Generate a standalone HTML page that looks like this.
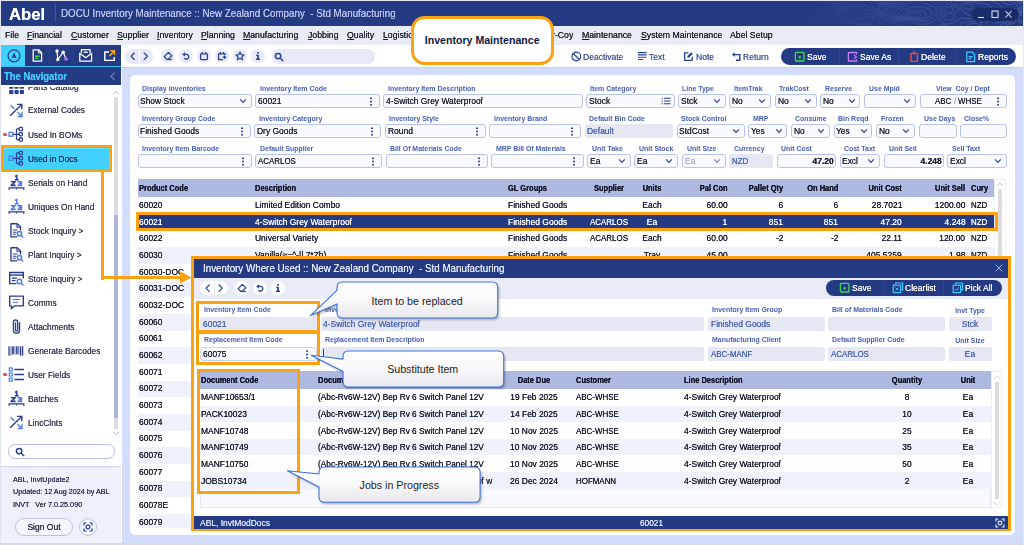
<!DOCTYPE html><html><head><meta charset="utf-8"><title>Abel</title><style>html,body{margin:0;padding:0}html{overflow:hidden;width:1024px;height:545px}body{width:1024px;height:545px;overflow:hidden;position:relative;background:#d3ddfb;font-family:"Liberation Sans",sans-serif;}body div,body span,body svg{position:absolute;display:block}span{white-space:pre;text-shadow:0 0 0.2px currentColor}u{text-decoration-thickness:0.8px;text-underline-offset:1px}</style></head><body>
<div style="left:0px;top:0px;width:1024px;height:26px;background:#243a83;"></div>
<svg style="left:808px;top:0px;" width="215" height="26" viewBox="0 0 215 26"><defs><linearGradient id="tg" x1="0" y1="0" x2="1" y2="0"><stop offset="0" stop-color="#fff" stop-opacity="0"/><stop offset="0.35" stop-color="#fff" stop-opacity="0.55"/><stop offset="1" stop-color="#fff" stop-opacity="1"/></linearGradient><mask id="tm"><rect width="215" height="26" fill="url(#tg)"/></mask></defs><path d="M76.5 0.0 77.3 1.0 78.2 1.7 79.3 2.1 81.0 2.1 82.3 1.7 83.3 1.2 84.3 0.4M36.0 18.7 37.0 18.0 37.7 17.0 38.2 15.7 38.3 14.7 38.0 13.2 37.3 12.3 35.7 12.1 34.3 12.7 33.5 13.3 32.7 14.3 32.3 15.3 32.3 17.0 32.8 18.0 33.7 18.7 35.3 18.9M75.9 24.0 77.0 23.5 77.2 22.0 77.0 20.7 76.7 19.1 76.3 18.0 75.3 17.0 74.0 17.0 73.0 17.6 72.2 18.3 71.4 19.3 70.7 20.3 70.0 21.3 69.9 22.7 70.7 23.3 72.0 23.8 73.3 24.0 75.0 24.1M75.0 0.0 75.5 1.0 76.3 2.0 77.1 2.7 78.3 3.3 79.7 3.6 81.3 3.5 82.7 3.2 83.8 2.7 85.0 2.0 85.9 1.3 86.7 0.6M36.2 20.3 37.3 19.8 38.3 19.0 39.0 18.3 39.8 17.3 40.3 16.3 40.9 15.0 40.9 13.3 40.3 12.1 39.7 11.3 38.7 10.5 37.3 10.1 35.9 10.3 34.7 10.9 33.7 11.6 32.8 12.3 32.0 13.2 31.3 14.2 30.9 15.3 30.9 17.0 31.3 18.3 32.0 19.3 32.8 20.0 34.0 20.5 35.7 20.5M89.0 25.7 88.8 24.7 88.0 23.8 87.0 23.3 85.7 22.9 84.3 22.5 83.0 22.2 81.8 21.7 80.7 21.0 80.0 20.3 79.3 19.2 78.8 18.0 78.3 16.9 77.7 15.9 76.7 15.1 75.3 14.8 73.7 15.0 72.7 15.4 71.6 16.0 70.7 16.7 69.7 17.4 68.7 18.1 67.6 18.7 66.3 19.1 65.0 19.5 63.7 19.8 62.4 20.3 61.7 21.2 62.0 22.3 62.7 23.1 63.7 23.7 64.9 24.3 66.0 24.7 67.3 25.1 68.7 25.4 70.3 25.7M9.1 25.7 8.0 25.3 6.3 25.3 5.0 25.6M73.6 0.0 74.2 1.0 74.9 2.0 75.7 3.0 76.4 3.7 77.4 4.3 78.7 4.8 80.3 5.0 82.0 4.7 83.3 4.3 84.3 3.9 85.5 3.3 86.6 2.7 87.5 2.0 88.4 1.3 89.3 0.6M141.9 4.3 143.0 3.7 143.7 2.9 143.5 1.7 142.4 1.0 141.3 0.7 139.7 0.6 138.5 1.0 137.8 2.0 138.3 3.3 139.0 4.0 140.3 4.5 141.9 4.3M163.6 9.0 164.7 8.4 165.0 7.3 164.4 6.3 163.6 5.7 162.5 5.0 161.3 4.5 160.2 4.0 159.0 3.6 157.7 3.3 156.0 3.0 154.3 3.2 153.5 4.0 153.8 5.3 154.4 6.3 155.3 7.3 156.2 8.0 157.3 8.6 158.6 9.0 160.0 9.2 161.7 9.3 163.3 9.1M35.7 22.0 37.0 21.7 38.0 21.3 39.1 20.7 40.2 20.0 41.3 19.3 42.3 18.9 44.0 18.7 45.7 18.8 47.3 18.9 49.0 18.8 50.3 18.6 51.9 18.3 53.0 17.7 52.3 16.3 51.9 15.3 51.4 14.0 51.0 13.0 50.5 11.7 50.0 10.7 49.3 9.7 48.3 8.8 47.3 8.3 45.8 8.3 44.7 8.7 43.3 9.2 42.0 9.5 40.7 9.3 39.3 8.8 38.0 8.6 36.7 8.7 35.3 9.3 34.3 9.9 33.3 10.6 32.4 11.3 31.7 12.0 30.8 13.0 30.1 14.0 29.7 15.3 29.6 16.7 29.8 18.0 30.3 19.3 31.0 20.3 31.8 21.0 32.9 21.7 34.2 22.0 35.7 22.0M93.7 25.7 93.6 24.3 93.0 23.0 92.3 22.3 91.2 21.7 90.0 21.3 88.6 21.0 87.0 20.8 85.7 20.5 84.3 20.3 83.0 19.8 82.0 19.2 81.2 18.3 80.5 17.3 80.0 16.3 79.3 15.3 78.4 14.3 77.3 13.7 76.0 13.4 74.3 13.4 73.0 13.8 71.7 14.3 70.7 14.7 69.5 15.3 68.3 15.9 67.2 16.3 65.7 16.7 64.3 16.8 62.7 16.8 61.0 16.9 59.3 17.0 58.0 17.1 56.7 17.3 55.1 17.7 53.8 18.0 54.0 19.0 54.7 19.8 55.4 20.7 56.3 21.5 57.3 22.3 58.2 23.0 59.2 23.7 60.3 24.3 61.3 24.7 62.7 25.2 64.0 25.6M10.9 25.7 10.0 25.0 8.7 24.5 7.0 24.4 5.5 24.7 4.3 25.0 3.0 25.6M72.4 0.0 73.0 1.0 73.7 2.1 74.3 3.1 75.1 4.0 76.0 4.9 77.0 5.7 78.0 6.1 79.3 6.4 80.9 6.3 82.3 6.0 83.6 5.7 84.7 5.2 85.9 4.7 87.0 4.1 88.0 3.5 89.0 2.8 90.0 2.2 91.0 1.5 92.0 1.0 93.3 0.3M133.4 0.0 133.3 1.2 133.7 2.3 134.3 3.4 135.1 4.3 136.0 5.2 137.0 6.0 138.0 6.6 139.0 7.1 140.3 7.4 141.7 7.3 143.0 6.7 144.0 6.0 145.0 5.3 146.0 4.7 147.0 4.2 148.3 3.9 149.5 4.3 150.4 5.0 151.3 6.0 152.0 7.0 152.7 8.0 153.3 9.0 153.9 10.0 154.6 11.0 155.3 11.9 156.3 12.7 157.3 13.3 158.3 13.9 159.3 14.4 160.7 14.9 162.0 15.3 163.3 15.5 165.0 15.5 166.3 15.3 167.7 15.0 169.0 14.5 170.3 14.0 171.3 13.6 172.7 13.0 173.7 12.6 175.0 12.0 176.0 11.6 177.3 11.1 178.4 10.7 179.7 10.1 180.7 9.6 181.7 9.0 182.6 8.0 182.7 6.7 182.0 5.7 181.0 5.0 180.0 4.5 178.7 4.1 177.3 3.8 176.0 3.6 174.3 3.5 172.7 3.4 171.0 3.4 169.7 3.3 168.0 3.2 166.3 3.0 165.0 2.9 163.7 2.7 162.0 2.4 160.7 2.2 159.3 1.9 157.9 1.7 156.3 1.4 155.0 1.3 153.3 1.2 151.7 1.3 150.0 1.3 148.3 1.1 147.2 0.7 146.0 0.1M214.7 2.6 213.4 3.0 212.3 3.6 211.7 4.3 212.0 5.7 213.0 6.3 214.0 6.7M97.8 25.7 97.6 24.3 97.2 23.0 96.7 21.9 95.7 21.1 94.7 20.6 93.3 20.2 92.0 19.9 90.7 19.6 89.0 19.4 87.7 19.2 86.3 19.0 85.0 18.7 83.7 18.1 82.7 17.3 82.0 16.5 81.3 15.5 80.7 14.5 79.9 13.7 79.0 12.9 77.8 12.3 76.3 12.0 74.7 12.1 73.3 12.4 72.0 12.8 70.7 13.2 69.4 13.7 68.3 14.0 66.7 14.3 65.3 14.4 64.0 14.3 62.3 14.1 61.0 13.9 59.5 13.7 58.0 13.4 56.7 13.2 55.3 12.7 54.3 12.1 53.5 11.3 52.7 10.4 52.0 9.6 51.3 8.7 50.3 7.7 49.4 7.0 48.3 6.5 47.0 6.3 45.7 6.5 44.3 7.0 43.3 7.3 41.7 7.6 40.0 7.5 38.7 7.3 37.3 7.4 36.0 7.8 35.0 8.3 34.0 9.0 33.0 9.7 32.0 10.5 31.0 11.3 30.2 12.0 29.3 13.0 28.7 14.0 28.3 15.1 28.2 16.7 28.4 18.0 28.8 19.3 29.3 20.3 30.1 21.3 31.0 22.2 32.0 22.9 33.2 23.3 34.7 23.6 36.3 23.5 37.7 23.2 39.0 22.7 40.1 22.3 41.3 21.9 42.7 21.7 44.3 21.5 46.0 21.5 47.7 21.6 49.0 21.7 50.7 22.0 52.0 22.3 53.1 22.7 54.3 23.2 55.5 23.7 56.7 24.2 57.7 24.7 59.0 25.2 60.3 25.7M141.7 20.3 143.2 20.0 144.3 19.6 145.3 19.0 146.3 18.2 147.0 17.1 147.0 15.9 146.3 14.9 145.3 14.1 144.3 13.6 143.0 13.0 141.7 12.8 140.0 13.0 139.0 13.4 138.0 14.1 137.0 15.0 136.3 15.9 135.8 17.0 135.9 18.7 136.7 19.6 137.7 20.1 139.0 20.4 140.7 20.4M12.4 25.7 11.7 25.0 10.6 24.3 9.3 24.0 7.7 23.8 6.0 23.9 4.7 24.2 3.4 24.7 2.3 25.1 1.0 25.7M71.0 0.0 71.7 1.0 72.4 2.0 73.1 3.0 73.7 4.0 74.4 5.0 75.1 6.0 76.0 7.0 76.7 7.7 77.7 8.5 79.0 8.7 80.3 8.4 81.6 8.0 82.7 7.6 84.0 7.1 85.1 6.7 86.3 6.1 87.3 5.6 88.5 5.0 89.7 4.3 90.7 3.8 91.7 3.2 92.8 2.7 94.0 2.1 95.2 1.7 96.3 1.3 97.7 0.8 98.9 0.3M128.9 0.0 129.3 1.1 130.0 2.3 130.7 3.2 131.3 4.0 132.3 5.0 133.0 5.7 134.0 6.6 134.9 7.3 135.7 8.0 136.6 9.0 137.0 10.0 136.8 11.3 136.1 12.3 135.3 13.3 134.7 14.2 134.0 15.1 133.3 16.2 132.7 17.3 132.3 18.3 132.0 20.0 132.6 21.3 133.3 22.1 134.3 22.9 135.3 23.4 136.7 24.0 138.0 24.1 139.3 23.9 140.7 23.6 142.0 23.3 143.3 22.9 144.7 22.4 145.7 22.0 147.0 21.4 148.0 20.8 149.0 20.3 150.0 19.7 151.1 19.0 152.3 18.4 153.7 18.1 155.3 18.1 157.0 18.3 158.3 18.5 159.7 18.7 161.3 18.8 163.0 18.9 164.7 18.8 166.0 18.6 167.3 18.3 168.7 17.9 170.0 17.4 171.1 17.0 172.3 16.5 173.7 16.0 174.7 15.7 176.0 15.2 177.3 14.9 178.7 14.6 180.0 14.3 181.4 14.0 183.0 13.7 184.3 13.4 185.7 13.1 187.0 12.8 188.3 12.4 189.3 12.0 190.7 11.4 191.7 10.8 192.6 10.0 193.3 9.0 193.4 7.7 193.0 6.7 192.2 5.7 191.3 4.9 190.3 4.1 189.3 3.4 188.3 2.8 187.3 2.2 186.3 1.7 185.0 1.1 183.8 0.7 182.4 0.3 181.0 0.2 179.3 0.2 177.7 0.3 176.3 0.4 174.7 0.7 173.3 0.8 172.0 1.0 170.3 1.2 168.7 1.3 167.3 1.3 165.7 1.3 164.3 1.3 162.7 1.2 161.0 1.0 159.7 0.8 158.3 0.7 156.7 0.4 155.3 0.3 153.7 0.1M214.7 1.5 213.3 1.8 212.0 2.2 210.8 2.7 209.7 3.3 209.0 4.0 208.7 5.3 209.3 6.3 210.3 6.9 211.5 7.3 212.8 7.7 214.3 7.9M102.9 25.7 102.1 24.7 101.5 23.7 100.9 22.7 100.2 21.7 99.3 21.0 98.1 20.3 97.0 19.9 95.7 19.5 94.3 19.1 93.0 18.9 91.7 18.6 90.0 18.3 88.7 18.1 87.3 17.8 86.0 17.4 85.0 17.0 84.0 16.2 83.2 15.3 82.5 14.3 81.8 13.3 81.0 12.3 80.3 11.6 79.3 10.7 78.3 10.0 77.0 9.9 75.7 10.3 74.3 10.7 73.3 11.0 72.0 11.4 70.7 11.8 69.3 12.1 67.7 12.3 66.0 12.2 64.7 12.0 63.3 11.6 62.0 11.1 60.7 10.7 59.6 10.3 58.3 10.0 57.0 9.6 55.7 9.1 54.7 8.5 53.7 7.8 52.7 7.0 51.8 6.3 50.9 5.7 49.8 5.0 48.7 4.6 47.0 4.6 45.7 4.9 44.7 5.3 43.3 5.9 42.0 6.2 40.3 6.3 38.7 6.2 37.2 6.3 36.0 6.8 34.9 7.3 33.9 8.0 33.0 8.7 32.0 9.3 31.0 10.0 30.0 10.7 29.0 11.5 28.0 12.3 27.3 13.2 26.7 14.3 26.5 15.7 26.5 17.3 26.8 18.7 27.3 20.0 27.8 21.0 28.5 22.0 29.3 23.0 30.0 23.7 31.0 24.3 32.3 24.9 33.7 25.2 35.0 25.3 36.3 25.3 37.8 25.0 39.1 24.7 40.4 24.3 41.8 24.0 43.3 23.7 44.7 23.6 46.3 23.5 48.0 23.6 49.3 23.7 51.0 23.9 52.3 24.2 53.7 24.6 55.0 25.0 56.0 25.3M149.7 12.0 148.0 12.1 146.7 11.7 145.7 11.1 144.9 10.3 144.7 9.2 145.3 8.0 146.1 7.3 147.3 6.7 149.0 7.0 149.8 7.7 150.4 8.7 150.7 10.0 150.4 11.3 149.7 12.0M13.8 25.7 13.0 24.8 12.0 24.1 10.8 23.7 9.4 23.3 8.0 23.2 6.3 23.3 5.0 23.5 3.7 23.9 2.6 24.3 1.3 24.9 0.1 25.3M140.1 25.7 139.0 25.3 137.7 24.8 136.0 24.7 134.3 25.0 133.0 25.1 131.7 25.4 130.0 25.6M45.1 0.0 46.3 0.5 47.7 1.0 48.8 1.0 50.0 0.4M69.3 0.0 70.0 0.7 70.8 1.7 71.5 2.7 72.2 3.7 72.7 4.7 73.3 6.0 73.7 7.0 73.6 8.3 72.8 9.3 71.7 9.9 70.4 10.3 69.0 10.5 67.3 10.5 66.0 10.1 64.9 9.7 63.7 9.0 62.8 8.3 61.8 7.7 60.8 7.0 59.7 6.4 58.5 6.0 57.0 5.7 55.7 5.3 54.7 5.0 53.3 4.3 52.3 3.8 51.3 3.2 50.3 2.6 49.3 2.0 47.7 1.9 46.7 2.5 45.7 3.1 44.7 3.8 43.6 4.3 42.3 4.8 41.0 5.0 39.3 5.1 37.7 5.2 36.3 5.6 35.3 6.1 34.3 6.7 33.3 7.4 32.3 8.1 31.3 8.7 30.2 9.3 29.0 9.9 28.0 10.4 26.8 11.0 25.7 11.6 24.7 12.3 24.0 13.1 23.6 14.3 23.7 15.7 24.0 17.0 24.4 18.3 24.9 19.7 25.3 20.9 25.8 22.0 26.3 23.0 27.0 24.0 27.9 25.0 28.7 25.7M115.6 0.0 117.0 0.0 118.7 0.0 120.3 0.1 121.7 0.3 123.0 0.8 124.0 1.3 125.0 2.0 126.0 2.8 127.0 3.7 127.7 4.3 128.7 5.2 129.6 6.0 130.3 6.7 131.3 7.6 132.1 8.3 132.8 9.3 133.2 10.7 133.0 12.0 132.3 13.3 131.7 14.3 131.0 15.3 130.3 16.3 129.7 17.1 128.9 18.0 128.0 18.9 127.2 19.7 126.3 20.5 125.3 21.2 124.3 21.9 123.3 22.3 122.0 22.8 120.7 23.2 119.3 23.5 118.0 23.8 116.7 24.0 115.0 24.2 113.3 24.3 111.7 24.3 110.0 24.2 108.7 24.0 107.3 23.6 106.1 23.0 105.0 22.4 104.0 21.7 103.0 21.1 102.0 20.6 100.7 20.0 99.7 19.6 98.3 19.2 97.0 18.8 95.7 18.5 94.3 18.2 93.0 17.9 91.7 17.6 90.3 17.3 89.0 17.0 87.7 16.5 86.5 16.0 85.6 15.3 84.8 14.3 84.2 13.3 83.7 12.0 83.5 10.7 84.1 9.7 85.0 8.9 86.0 8.3 87.2 7.7 88.3 7.1 89.3 6.6 90.5 6.0 91.7 5.4 92.7 4.9 94.0 4.4 95.0 4.0 96.3 3.5 97.7 3.1 98.7 2.7 99.9 2.0 100.8 1.3 101.7 0.6M168.3 0.0 166.7 0.2 165.0 0.2 163.3 0.2 161.7 0.1 160.3 0.0M214.7 0.5 213.3 0.7 211.7 1.0 210.4 1.3 209.3 1.7 208.0 2.2 206.9 2.7 205.7 3.3 204.7 3.8 203.3 4.3 202.0 4.6 200.3 4.4 199.0 4.0 198.0 3.6 196.7 3.1 195.7 2.6 194.4 2.0 193.3 1.4 192.3 0.8 191.3 0.2M152.2 25.7 152.7 24.5 153.7 23.7 154.7 23.2 156.0 22.8 157.3 22.4 158.7 22.1 160.0 21.8 161.3 21.6 163.0 21.3 164.3 21.2 166.0 21.0 167.3 20.9 168.7 20.6 170.0 20.2 171.1 19.7 172.3 19.1 173.3 18.6 174.7 18.0 175.7 17.7 177.0 17.3 178.3 17.0 180.0 16.7 181.3 16.5 182.7 16.3 184.3 16.1 185.8 16.0 187.3 15.8 189.0 15.7 190.3 15.5 191.7 15.3 193.2 15.0 194.5 14.7 195.7 14.2 196.9 13.7 198.0 13.0 198.9 12.3 199.8 11.7 200.7 11.0 201.7 10.2 202.7 9.4 203.7 8.8 205.0 8.4 206.7 8.4 208.3 8.5 210.0 8.6 211.3 8.8 213.0 8.9 214.3 9.0M15.7 25.7 15.0 24.9 14.0 24.2 13.0 23.7 11.7 23.2 10.3 22.8 9.0 22.6 7.3 22.6 6.0 22.7 4.7 23.0 3.3 23.5 2.0 24.0 1.0 24.4M43.0 25.7 44.3 25.4 45.7 25.3 47.3 25.2 49.0 25.2 50.7 25.3 52.0 25.5M0.0 10.3 1.7 10.3 3.3 10.3 5.0 10.3 6.7 10.2 8.3 10.0 9.7 9.9 11.1 9.7 12.0 9.0 11.2 8.3 10.3 7.7 9.3 7.0 8.3 6.2 7.3 5.4 6.5 4.7 5.7 3.8 4.9 3.0 4.2 2.0 3.5 1.0M41.9 0.0 43.0 0.6 43.7 1.3 43.3 2.6 42.3 3.3 41.3 3.7 39.7 3.9 38.3 4.0 37.0 4.4 35.7 5.0 34.7 5.6 33.7 6.2 32.7 6.9 31.7 7.5 30.6 8.0 29.3 8.5 28.0 8.9 26.7 9.1 25.0 9.3 23.3 9.3 21.7 9.3 20.0 9.2 18.3 9.2 16.7 9.3 15.3 9.4 14.1 10.0 15.0 10.8 16.0 11.7 16.7 12.3 17.7 13.2 18.4 14.0 19.2 15.0 20.0 16.0 20.6 17.0 21.1 18.0 21.7 19.3 22.0 20.5 22.2 22.0 22.1 23.7 21.5 24.7 20.3 25.2 19.0 25.0 17.7 24.5 16.6 24.0 15.3 23.5 14.1 23.0 13.0 22.7 11.7 22.3 10.0 22.0 8.7 21.9 7.0 22.0 5.7 22.2 4.3 22.5 3.0 23.0 2.0 23.4 0.7 23.9M109.6 0.0 110.6 0.7 111.3 1.4 112.3 2.3 113.3 2.9 114.6 3.3 116.0 3.6 117.3 3.7 119.0 3.9 120.3 4.2 121.7 4.6 122.7 5.1 123.8 5.7 124.9 6.3 125.9 7.0 126.8 7.7 127.7 8.5 128.4 9.3 129.0 10.3 129.2 12.0 128.8 13.3 128.3 14.3 127.5 15.3 126.7 16.2 125.7 17.0 124.8 17.7 123.7 18.3 122.7 18.9 121.7 19.5 120.5 20.0 119.3 20.5 118.0 20.9 116.7 21.2 115.3 21.5 113.7 21.6 112.3 21.7 111.0 21.6 109.3 21.5 108.0 21.2 106.7 20.8 105.3 20.4 104.1 20.0 103.0 19.6 101.7 19.2 100.3 18.8 99.0 18.5 97.7 18.1 96.3 17.8 95.0 17.4 93.7 17.1 92.3 16.7 91.0 16.3 90.0 16.0 88.8 15.3 87.9 14.7 87.2 13.7 87.0 12.3 87.3 11.2 88.0 10.3 89.0 9.6 90.0 8.9 91.1 8.3 92.3 7.7 93.3 7.3 94.7 6.8 95.8 6.3 97.0 6.0 98.3 5.5 99.7 5.1 100.7 4.6 101.7 3.9 102.4 3.0 103.0 2.0 103.7 1.0 104.7 0.1M209.8 0.0 208.3 0.3 207.0 0.6 205.7 0.8 204.0 1.0 203.0 1.0 201.3 0.9 200.0 0.7 198.7 0.3M70.0 8.5 68.3 8.6 67.0 8.3 65.9 7.7 65.0 6.9 64.3 6.0 63.7 4.8 63.4 3.3 63.8 2.0 64.7 1.2 66.0 0.8 67.4 1.0 68.7 1.6 69.6 2.3 70.3 3.2 71.0 4.3 71.4 5.3 71.5 7.0 70.8 8.0M173.8 25.7 172.9 25.0 172.2 24.0 172.7 23.0 173.3 22.0 174.3 21.0 175.2 20.3 176.3 19.7 177.3 19.3 178.7 18.9 180.0 18.6 181.7 18.4 183.0 18.3 184.7 18.2 186.3 18.1 188.0 18.1 189.7 18.0 191.0 18.0 192.7 17.9 194.3 17.7 195.7 17.5 197.0 17.2 198.1 16.7 199.1 16.0 200.0 15.3 201.0 14.4 201.8 13.7 202.7 13.0 203.7 12.3 204.9 11.7 206.0 11.2 207.3 10.7 208.7 10.4 210.0 10.2 211.7 10.1 213.3 10.1M159.1 25.7 160.0 24.8 161.0 24.2 162.3 23.7 163.7 23.4 165.0 23.2 166.7 23.2 168.0 23.4 169.3 23.7 170.7 24.3 170.7 25.5M38.9 0.0 40.0 0.7 40.5 1.7 39.6 2.3 38.3 2.8 37.0 3.3 36.0 3.8 35.0 4.4 34.0 5.1 33.0 5.7 31.9 6.3 30.7 6.9 29.3 7.3 28.0 7.5 26.3 7.5 24.8 7.3 23.3 7.1 22.0 6.8 20.7 6.4 19.3 6.1 18.0 5.7 16.7 5.4 15.5 5.0 14.3 4.6 13.0 4.1 12.0 3.6 10.8 3.0 9.8 2.3 9.0 1.7 8.0 0.7M113.7 19.7 112.0 19.9 110.3 19.9 108.7 19.8 107.3 19.6 106.0 19.3 104.5 19.0 103.1 18.7 101.7 18.3 100.4 18.0 99.2 17.7 97.9 17.3 96.7 17.0 95.3 16.6 94.0 16.1 92.9 15.7 91.8 15.0 91.0 14.2 90.9 12.7 91.6 11.7 92.5 11.0 93.7 10.4 94.7 9.9 96.0 9.4 97.2 9.0 98.4 8.7 99.7 8.3 101.1 8.0 102.5 7.7 103.8 7.3 105.1 7.0 106.4 6.7 108.0 6.5 109.7 6.6 111.0 6.7 112.7 6.9 114.0 7.1 115.7 7.3 117.0 7.5 118.3 7.9 119.7 8.3 120.7 8.8 121.7 9.4 122.7 10.2 123.3 11.1 123.8 12.3 123.6 13.7 123.0 14.8 122.3 15.7 121.3 16.5 120.3 17.2 119.3 17.8 118.3 18.3 117.0 18.9 115.7 19.3 114.3 19.6M178.9 25.7 178.3 24.7 178.1 23.0 178.7 22.0 179.7 21.3 181.0 20.8 182.3 20.6 184.0 20.4 185.3 20.3 187.0 20.3 188.7 20.2 190.3 20.2 192.0 20.2 193.7 20.1 195.0 20.0 196.7 19.8 198.0 19.5 199.3 19.0 200.3 18.3 201.0 17.7 201.8 16.7 202.5 15.7 203.3 14.8 204.2 14.0 205.1 13.3 206.3 12.7 207.3 12.2 208.7 11.8 210.0 11.5 211.3 11.3 213.0 11.2 214.7 11.2M0.0 12.2 1.3 12.4 2.7 12.7 4.3 13.0 5.7 13.3 7.0 13.5 8.3 13.8 9.7 14.0 11.3 14.3 12.5 14.7 13.7 15.1 14.8 15.7 15.8 16.3 16.7 17.1 17.4 18.0 18.0 19.3 18.0 20.4 17.3 21.3 16.0 21.7 14.7 21.6 13.0 21.4 11.7 21.3 10.0 21.1 8.3 21.1 6.7 21.2 5.3 21.5 4.0 22.0 3.0 22.3 1.7 22.9 0.5 23.3M36.7 0.0 37.2 1.3 36.4 2.3 35.5 3.0 34.6 3.7 33.6 4.3 32.5 5.0 31.3 5.6 30.1 6.0 28.7 6.2 27.0 6.1 25.7 5.9 24.3 5.6 23.0 5.2 21.7 4.7 20.5 4.3 19.3 3.9 18.0 3.4 16.8 3.0 15.7 2.5 14.5 2.0 13.3 1.3 12.4 0.7 11.7 0.0M112.0 18.3 110.3 18.5 108.7 18.5 107.0 18.4 105.7 18.2 104.3 18.0 102.7 17.7 101.3 17.3 100.0 17.0 98.9 16.7 97.7 16.2 96.3 15.7 95.3 15.1 94.7 14.3 95.0 13.0 95.9 12.3 97.0 11.8 98.3 11.3 99.7 11.0 101.0 10.7 102.3 10.5 104.0 10.4 105.3 10.3 107.0 10.2 108.7 10.3 110.0 10.4 111.7 10.6 113.0 10.9 114.2 11.3 115.3 11.8 116.3 12.5 117.1 13.3 117.5 14.7 117.0 15.8 116.2 16.7 115.2 17.3 114.0 17.8 112.7 18.2M186.4 25.7 186.4 24.7 187.3 23.7 188.3 23.2 189.7 22.8 191.0 22.6 192.3 22.3 194.0 22.1 195.3 21.9 196.9 21.7 198.3 21.4 199.7 21.1 201.0 20.7 202.0 20.1 202.7 19.3 203.3 18.0 203.7 17.0 204.3 15.9 205.1 15.0 206.0 14.2 207.0 13.6 208.3 13.0 209.4 12.7 211.0 12.3 212.3 12.2 214.0 12.1M0.0 13.6 1.3 13.9 2.7 14.3 3.7 14.7 5.0 15.1 6.3 15.7 7.3 16.1 8.7 16.6 9.7 17.0 10.8 17.7 11.5 18.7 10.3 19.3 9.0 19.5 7.7 19.8 6.3 20.2 5.2 20.7 4.0 21.1 2.9 21.7 1.7 22.2 0.6 22.7M35.0 0.0 35.3 1.2 34.7 2.3 33.9 3.0 32.9 3.7 31.8 4.3 30.7 4.7 29.0 5.0 27.3 4.8 26.0 4.5 24.7 4.1 23.6 3.7 22.3 3.1 21.2 2.7 20.0 2.1 19.0 1.7 17.7 1.0 16.7 0.4M110.0 17.0 108.3 17.2 106.7 17.2 105.0 17.1 103.7 16.8 102.3 16.5 101.0 16.1 99.8 15.7 98.8 15.0 98.7 14.0 99.7 13.3 101.0 12.8 102.3 12.6 104.0 12.4 105.7 12.4 107.3 12.5 108.7 12.7 110.0 13.1 111.3 13.6 112.2 14.3 112.5 15.7 111.7 16.4 110.3 16.9M192.1 25.7 193.0 24.8 194.0 24.3 195.3 23.8 196.7 23.5 198.0 23.2 199.3 22.9 200.7 22.7 202.1 22.3 203.3 21.9 204.3 21.2 205.0 20.0 205.1 18.7 205.3 17.3 205.9 16.0 206.7 15.2 207.7 14.4 208.7 13.9 210.0 13.4 211.3 13.2 213.0 13.0 214.0 13.0M0.0 14.7 1.3 15.2 2.4 15.7 3.5 16.3 4.3 17.0 5.0 18.0 4.7 19.3 3.9 20.0 3.0 20.7 1.9 21.3 0.7 21.9M33.4 0.0 33.7 1.1 33.0 2.2 32.0 3.0 31.0 3.4 29.7 3.7 28.3 3.6 27.0 3.3 25.7 2.8 24.7 2.3 23.5 1.7 22.3 1.0 21.4 0.3M197.0 25.7 198.0 25.1 199.3 24.7 200.7 24.4 202.0 24.1 203.3 23.8 204.7 23.6 206.0 23.1 207.0 22.4 207.3 21.3 207.1 20.0 206.8 18.7 206.9 17.0 207.5 16.0 208.3 15.2 209.3 14.6 210.7 14.1 212.0 13.9 213.7 13.8M0.0 15.9 1.0 16.4 2.0 17.2 2.7 18.3 2.5 19.3 1.7 20.3 0.8 21.0M30.9 0.0 31.4 1.0 30.7 1.7 29.0 1.9 27.7 1.5 26.7 0.8M214.7 22.4 213.0 22.5 211.7 22.2 210.7 21.6 209.7 20.7 209.0 19.7 208.5 18.7 208.3 17.6 208.8 16.3 209.7 15.6 210.9 15.0 212.3 14.7 213.7 14.6M0.0 17.3 0.7 18.1 0.7 19.5 0.0 20.4M214.7 20.4 213.0 20.4 211.9 20.0 210.9 19.3 210.2 18.3 210.3 16.8 211.3 16.0 212.3 15.7 214.0 15.6" fill="none" stroke="#8fa3e0" stroke-width="0.5" opacity="0.62" mask="url(#tm)"/></svg>
<span style="top:7.30px;height:14px;line-height:14px;font-size:17.3px;color:#fff;white-space:pre;font-weight:bold;left:8.6px;transform:scaleX(0.965);transform-origin:0 50%;">Abel</span>
<div style="left:55px;top:4px;width:1px;height:18px;background:#3f56a0;"></div>
<span style="top:5.60px;height:14px;line-height:14px;font-size:11px;color:#b9c5ea;white-space:pre;left:60.5px;transform:scaleX(0.89);transform-origin:0 50%;">DOCU Inventory Maintenance :: New Zealand Company  - Std Manufacturing</span>
<div style="left:971px;top:7.5px;width:48px;height:13px;background:#1a2c68;border-radius:6.5px;"></div>
<svg style="left:975px;top:8px;" width="40" height="12" viewBox="0 0 40 12"><g fill="none" stroke="#d5dcf3" stroke-width="1.1"><path d="M3 9.5h6"/><rect x="17" y="3" width="6" height="6.5"/><path d="M30.5 3l6 6.5M36.5 3l-6 6.5"/></g></svg>
<div style="left:0px;top:26px;width:1024px;height:19.3px;background:#e9ecf5;"></div>
<span style="top:28.40px;height:14px;line-height:14px;font-size:9.8px;color:#1c2030;white-space:pre;left:5px;transform:scaleX(0.89);transform-origin:0 50%;">File</span>
<span style="top:28.40px;height:14px;line-height:14px;font-size:9.8px;color:#1c2030;white-space:pre;left:27px;transform:scaleX(0.89);transform-origin:0 50%;"><u>F</u>inancial</span>
<span style="top:28.40px;height:14px;line-height:14px;font-size:9.8px;color:#1c2030;white-space:pre;left:70.5px;transform:scaleX(0.89);transform-origin:0 50%;"><u>C</u>ustomer</span>
<span style="top:28.40px;height:14px;line-height:14px;font-size:9.8px;color:#1c2030;white-space:pre;left:117px;transform:scaleX(0.89);transform-origin:0 50%;"><u>S</u>upplier</span>
<span style="top:28.40px;height:14px;line-height:14px;font-size:9.8px;color:#1c2030;white-space:pre;left:157px;transform:scaleX(0.89);transform-origin:0 50%;"><u>I</u>nventory</span>
<span style="top:28.40px;height:14px;line-height:14px;font-size:9.8px;color:#1c2030;white-space:pre;left:201px;transform:scaleX(0.89);transform-origin:0 50%;"><u>P</u>lanning</span>
<span style="top:28.40px;height:14px;line-height:14px;font-size:9.8px;color:#1c2030;white-space:pre;left:243px;transform:scaleX(0.89);transform-origin:0 50%;"><u>M</u>anufacturing</span>
<span style="top:28.40px;height:14px;line-height:14px;font-size:9.8px;color:#1c2030;white-space:pre;left:308px;transform:scaleX(0.89);transform-origin:0 50%;"><u>J</u>obbing</span>
<span style="top:28.40px;height:14px;line-height:14px;font-size:9.8px;color:#1c2030;white-space:pre;left:347px;transform:scaleX(0.89);transform-origin:0 50%;"><u>Q</u>uality</span>
<span style="top:28.40px;height:14px;line-height:14px;font-size:9.8px;color:#1c2030;white-space:pre;left:383px;transform:scaleX(0.89);transform-origin:0 50%;"><u>L</u>ogistics</span>
<span style="top:28.40px;height:14px;line-height:14px;font-size:9.8px;color:#1c2030;white-space:pre;right:450.70000000000005px;transform:scaleX(0.89);transform-origin:100% 50%;"><u>I</u>nter-Coy</span>
<span style="top:28.40px;height:14px;line-height:14px;font-size:9.8px;color:#1c2030;white-space:pre;left:582px;transform:scaleX(0.89);transform-origin:0 50%;"><u>M</u>aintenance</span>
<span style="top:28.40px;height:14px;line-height:14px;font-size:9.8px;color:#1c2030;white-space:pre;left:641px;transform:scaleX(0.89);transform-origin:0 50%;"><u>S</u>ystem Maintenance</span>
<span style="top:28.40px;height:14px;line-height:14px;font-size:9.8px;color:#1c2030;white-space:pre;left:730px;transform:scaleX(0.89);transform-origin:0 50%;">Abel Setup</span>
<div style="left:0px;top:45.3px;width:1024px;height:21.6px;background:#ffffff;"></div>
<div style="left:121.3px;top:66.9px;width:903px;height:1px;background:#c3cef0;"></div>
<div style="left:0px;top:45.3px;width:121.3px;height:21.7px;background:#243a83;"></div>
<div style="left:1px;top:45.3px;width:24.3px;height:21px;background:#41d0ff;"></div>
<div style="left:0px;top:66px;width:121.3px;height:1.6px;background:#3bbcf0;"></div>
<div style="left:124.5px;top:49.2px;width:28.5px;height:14.5px;background:#e7eaf6;border-radius:7.25px;"></div>
<div style="left:138.5px;top:49.2px;width:0.6px;height:14.5px;background:#ffffff;"></div>
<svg style="left:124.5px;top:49.2px;" width="28.5" height="14.5" viewBox="0 0 28.5 14.5"><g fill="none" stroke="#2c4191" stroke-width="1.25" stroke-linecap="round" stroke-linejoin="round"><path d="M9.295 4.05l-3.2 3.2l3.2 3.2"/><path d="M19.205 4.05l3.2 3.2l-3.2 3.2"/></g></svg>
<div style="left:160.5px;top:49.4px;width:14px;height:14px;background:#e7eaf6;border-radius:7.0px;"></div>
<svg style="left:162.5px;top:51.4px;" width="10" height="10" viewBox="0 0 10 10"><g fill="none" stroke="#2c4191" stroke-width="1.25" stroke-linejoin="round"><path d="M1.2 5.6L5.4 1.4L8.8 4.8L5.2 8.4H3.6Z"/><path d="M3.6 8.5H9"/></g></svg>
<div style="left:179.0px;top:49.4px;width:14px;height:14px;background:#e7eaf6;border-radius:7.0px;"></div>
<svg style="left:181px;top:51.4px;" width="10" height="10" viewBox="0 0 10 10"><g fill="none" stroke="#2c4191" stroke-width="1.4"><path d="M2.6 3.4H5.6A2.4 2.4 0 1 1 3.4 7.2"/></g><path d="M1.2 3.4L4 1.2V5.6Z" fill="#2c4191"/></svg>
<div style="left:197.0px;top:49.4px;width:14px;height:14px;background:#e7eaf6;border-radius:7.0px;"></div>
<svg style="left:199px;top:51.4px;" width="10" height="10" viewBox="0 0 10 10"><g fill="none" stroke="#2c4191" stroke-width="1.3"><rect x="1.6" y="2.8" width="6.8" height="5.8" rx="0.8"/><path d="M3.2 1v2M6.8 1v2"/></g></svg>
<div style="left:215.0px;top:49.4px;width:14px;height:14px;background:#e7eaf6;border-radius:7.0px;"></div>
<svg style="left:217px;top:51.4px;" width="10" height="10" viewBox="0 0 10 10"><g fill="none" stroke="#2c4191" stroke-width="1.3"><path d="M8 4V2.8H1.6V8.6H6"/><path d="M3.2 1v2M6.4 1v2M5.6 6.2H9.4M7.5 4.4V8"/></g></svg>
<div style="left:233.0px;top:49.4px;width:14px;height:14px;background:#e7eaf6;border-radius:7.0px;"></div>
<svg style="left:235px;top:51.4px;" width="10" height="10" viewBox="0 0 10 10"><path d="M5 1.1L6.2 3.7L9 4L6.9 5.9L7.5 8.7L5 7.3L2.5 8.7L3.1 5.9L1 4L3.8 3.7Z" fill="none" stroke="#2c4191" stroke-width="1.2" stroke-linejoin="round"/></svg>
<div style="left:251.0px;top:49.4px;width:14px;height:14px;background:#e7eaf6;border-radius:7.0px;"></div>
<svg style="left:253px;top:51.4px;" width="10" height="10" viewBox="0 0 10 10"><g fill="#2c4191"><rect x="4.2" y="1" width="1.7" height="1.7"/><path d="M3.2 3.8H5.9V7.6H6.9V8.9H3V7.6H4.2V5.1H3.2Z"/></g></svg>
<div style="left:272px;top:49.2px;width:102.5px;height:14.5px;background:#e7eaf6;border-radius:7.25px;"></div>
<svg style="left:274px;top:51.6px;" width="10" height="10" viewBox="0 0 10 10"><g fill="none" stroke="#2c4191" stroke-width="1.5" stroke-linecap="round"><circle cx="4.1" cy="4.1" r="2.7"/><path d="M6.3 6.3L8.8 8.8"/></g></svg>
<svg style="left:6.5px;top:48.5px;" width="14" height="14" viewBox="0 0 14 14"><circle cx="7" cy="6.8" r="6" fill="none" stroke="#243a83" stroke-width="1.2"/><path d="M7 3.2L9.6 9.6L7 8.3L4.4 9.6Z" fill="#243a83"/></svg>
<svg style="left:31px;top:48px;" width="14" height="15" viewBox="0 0 14 15"><path d="M2.2 1.8H7.6L10.6 4.8V13.2H2.2Z" fill="none" stroke="#ffffff" stroke-width="1.3" stroke-linejoin="round"/><path d="M7.4 2V5H10.4" fill="none" stroke="#ffffff" stroke-width="1"/><path d="M4 8.3H8.6M4 10.4H7.4" stroke="#3ddc4a" stroke-width="1.4"/></svg>
<svg style="left:54px;top:48px;" width="16" height="15" viewBox="0 0 16 15"><path d="M3 3L3.8 11.6L9.2 4.2L12 11" fill="none" stroke="#ffffff" stroke-width="1.2"/><circle cx="3" cy="3" r="1.7" fill="#ffffff"/><circle cx="9.2" cy="4.2" r="1.7" fill="#ffffff"/><circle cx="3.8" cy="11.6" r="1.7" fill="#ffffff"/><circle cx="12" cy="11" r="1.8" fill="#c070ff"/></svg>
<svg style="left:78px;top:48px;" width="16" height="15" viewBox="0 0 16 15"><g fill="none" stroke="#ffffff" stroke-width="1.3" stroke-linejoin="round"><path d="M1.8 5.2V13.2H13.6V5.2L7.7 9.8Z"/><path d="M3.4 5V1.6H12V5"/><path d="M5.6 4.2H9.8"/></g></svg>
<svg style="left:102px;top:48px;" width="16" height="15" viewBox="0 0 16 15"><path d="M7 4H2.8V12.4H12.2V9" fill="none" stroke="#ffffff" stroke-width="1.4"/><path d="M7.4 7.9L12.2 2.9M8.2 2.7H12.4V6.9" fill="none" stroke="#f7a21b" stroke-width="1.5"/></svg>
<div style="left:49px;top:47px;width:0.6px;height:18px;background:#2c4490;"></div>
<div style="left:73px;top:47px;width:0.6px;height:18px;background:#2c4490;"></div>
<div style="left:97px;top:47px;width:0.6px;height:18px;background:#2c4490;"></div>
<svg style="left:571px;top:51px;" width="11" height="11" viewBox="0 0 11 11"><g fill="none" stroke="#2c4191" stroke-width="1.2"><circle cx="5.3" cy="5.5" r="4.3"/><path d="M2.3 2.5L8.3 8.5"/></g></svg>
<span style="top:49.60px;height:14px;line-height:14px;font-size:9.6px;color:#4b5d9f;white-space:pre;left:583.3px;transform:scaleX(0.89);transform-origin:0 50%;">Deactivate</span>
<svg style="left:637px;top:51px;" width="11" height="11" viewBox="0 0 11 11"><path d="M1 1.6H9.6M1 3.9H9.6M1 6.2H9.6M1 8.5H6.4" stroke="#2c4191" stroke-width="1.1"/></svg>
<span style="top:49.60px;height:14px;line-height:14px;font-size:9.6px;color:#4b5d9f;white-space:pre;left:649.3px;transform:scaleX(0.89);transform-origin:0 50%;">Text</span>
<svg style="left:683px;top:51px;" width="11" height="11" viewBox="0 0 11 11"><path d="M5.4 1.8H1.6V9.4H9.2V5.8" fill="none" stroke="#2c4191" stroke-width="1.3"/><path d="M4.2 6.8L4.6 4.8L8.2 1.2L9.8 2.8L6.2 6.4Z" fill="#2c4191"/></svg>
<span style="top:49.60px;height:14px;line-height:14px;font-size:9.6px;color:#4b5d9f;white-space:pre;left:695.8px;transform:scaleX(0.89);transform-origin:0 50%;">Note</span>
<svg style="left:731px;top:51px;" width="11" height="11" viewBox="0 0 11 11"><path d="M3.6 1.2L1 3.6L3.6 6Z" fill="#2c4191"/><path d="M2.6 3.6H8.8V9.2H5" fill="none" stroke="#2c4191" stroke-width="1.4"/></svg>
<span style="top:49.60px;height:14px;line-height:14px;font-size:9.6px;color:#4b5d9f;white-space:pre;left:743px;transform:scaleX(0.89);transform-origin:0 50%;">Return</span>
<div style="left:780.5px;top:48px;width:235.8px;height:17px;background:#243a83;border-radius:8.5px;"></div>
<div style="left:839px;top:49px;width:0.6px;height:15px;background:#2e4592;"></div>
<div style="left:897.5px;top:49px;width:0.6px;height:15px;background:#2e4592;"></div>
<div style="left:956px;top:49px;width:0.6px;height:15px;background:#2e4592;"></div>
<svg style="left:794px;top:51px;" width="12" height="12" viewBox="0 0 12 12"><rect x="1.4" y="1.4" width="8.6" height="8.6" rx="0.8" fill="none" stroke="#3fd45a" stroke-width="1.3"/><rect x="4.6" y="5.2" width="2.2" height="2.2" fill="#3fd45a"/></svg>
<span style="top:49.60px;height:14px;line-height:14px;font-size:9.6px;color:#fff;white-space:pre;left:807.3px;transform:scaleX(0.89);transform-origin:0 50%;">Save</span>
<svg style="left:847px;top:51px;" width="12" height="12" viewBox="0 0 12 12"><path d="M9.6 3.4V1.6H1.4V10H9.6V8.4" fill="none" stroke="#c67bff" stroke-width="1.3"/><path d="M7 4L9.4 5.9L7 7.8" fill="none" stroke="#c67bff" stroke-width="1.2"/><path d="M2.6 1.4h1M5 1.4h1M7.4 1.4h1" stroke="#c67bff" stroke-width="1.6"/></svg>
<span style="top:49.60px;height:14px;line-height:14px;font-size:9.6px;color:#fff;white-space:pre;left:859.8px;transform:scaleX(0.89);transform-origin:0 50%;">Save As</span>
<svg style="left:909px;top:51px;" width="11" height="12" viewBox="0 0 11 12"><path d="M2 3.4V10.4H8.4V3.4" fill="none" stroke="#ef4a3c" stroke-width="1.4"/><path d="M0.8 2.6H9.6M3.6 1.2H6.8" stroke="#ef4a3c" stroke-width="1.3"/></svg>
<span style="top:49.60px;height:14px;line-height:14px;font-size:9.6px;color:#fff;white-space:pre;left:921.3px;transform:scaleX(0.89);transform-origin:0 50%;">Delete</span>
<svg style="left:965px;top:51px;" width="12" height="12" viewBox="0 0 12 12"><path d="M1.8 1.2H7.2L9.6 3.6V10.6H1.8Z" fill="none" stroke="#3fc8ff" stroke-width="1.3" stroke-linejoin="round"/><path d="M3.6 5.6H7.8M3.6 7.8H6.6" stroke="#3fc8ff" stroke-width="1.1"/></svg>
<span style="top:49.60px;height:14px;line-height:14px;font-size:9.6px;color:#fff;white-space:pre;left:978px;transform:scaleX(0.89);transform-origin:0 50%;">Reports</span>
<div style="left:0px;top:67px;width:121.8px;height:478px;background:#ffffff;"></div>
<div style="left:0px;top:67.2px;width:121.3px;height:18.3px;background:#243a83;"></div>
<span style="top:69.30px;height:14px;line-height:14px;font-size:10.6px;color:#43c6ff;white-space:pre;font-weight:bold;left:4.3px;transform:scaleX(0.89);transform-origin:0 50%;">The Navigator</span>
<svg style="left:108px;top:71px;" width="10" height="11" viewBox="0 0 10 11"><path d="M6.6 1.6L3 5.4L6.6 9.2" fill="none" stroke="#6f86c9" stroke-width="1.1"/></svg>
<div style="left:0;top:86.5px;width:121px;height:358px;overflow:hidden">
<svg style="left:7.7px;top:-8.549999999999997px;" width="17" height="17" viewBox="0 0 16 16"><g fill="#2b3f8f"><rect x="1.1" y="1.2" width="3.9" height="3.9" rx="0.4"/><rect x="1.1" y="6.2" width="3.9" height="3.9" rx="0.4"/><rect x="1.1" y="11.2" width="3.9" height="3.9" rx="0.4"/><rect x="6.1" y="1.2" width="3.9" height="3.9" rx="0.4"/><rect x="6.1" y="6.2" width="3.9" height="3.9" rx="0.4"/><rect x="6.1" y="11.2" width="3.9" height="3.9" rx="0.4"/><rect x="11.1" y="1.2" width="3.9" height="3.9" rx="0.4"/><rect x="11.1" y="6.2" width="3.9" height="3.9" rx="0.4"/><rect x="11.1" y="11.2" width="3.9" height="3.9" rx="0.4"/></g></svg>
<span style="top:-6.25px;height:14px;line-height:14px;font-size:9.4px;color:#383d55;white-space:pre;left:28.3px;transform:scaleX(0.89);transform-origin:0 50%;">Parts Catalog</span>
<svg style="left:7.7px;top:15.480000000000004px;" width="17" height="17" viewBox="0 0 16 16"><g fill="none" stroke-width="1.3"><path d="M2 13L12.6 2.6M8.4 2.2H13V6.8" stroke="#2b3f8f"/><path d="M2.4 3L6 6.6M9 9.6L13 13.4M13.2 9.6V13.6H9.2" stroke="#4a7de0"/></g></svg>
<span style="top:16.98px;height:14px;line-height:14px;font-size:9.4px;color:#383d55;white-space:pre;left:28.3px;transform:scaleX(0.89);transform-origin:0 50%;">External Codes</span>
<svg style="left:7.7px;top:39.50999999999999px;" width="17" height="17" viewBox="0 0 16 16"><g fill="none" stroke-width="1.2"><rect x="1" y="6" width="3.6" height="3.6" stroke="#4a7de0"/><path d="M4.6 7.8H8M8 2.8V12.8M8 2.8H10.6M8 7.8H10.6M8 12.8H10.6" stroke="#2b3f8f"/><rect x="10.6" y="1.3" width="3" height="3" rx="0.8" stroke="#2b3f8f"/><rect x="10.6" y="6.3" width="3" height="3" rx="0.8" stroke="#2b3f8f"/><rect x="10.6" y="11.3" width="3" height="3" rx="0.8" stroke="#2b3f8f"/></g></svg>
<span style="top:41.01px;height:14px;line-height:14px;font-size:9.4px;color:#383d55;white-space:pre;left:28.3px;transform:scaleX(0.89);transform-origin:0 50%;">Used In BOMs</span>
<div style="left:3.2px;top:46.10999999999999px;width:3.4px;height:3.4px;background:#e64a45;border-radius:1.7px;"></div>
<div style="left:1.1px;top:58.69999999999999px;width:111px;height:26.9px;background:#41d0ff;border:2.75px solid #fba112;box-sizing:border-box;"></div>
<div style="left:3.9px;top:61.099999999999994px;width:105.7px;height:21.6px;border:1px dotted #d4f5ff;box-sizing:border-box;border-left:none;border-bottom:none;opacity:.55;"></div>
<svg style="left:7.7px;top:63.54000000000002px;" width="17" height="17" viewBox="0 0 16 16"><g fill="none" stroke-width="1.2"><rect x="1" y="6" width="3.6" height="3.6" stroke="#4a7de0"/><path d="M4.6 7.8H8M8 2.8V12.8M8 2.8H10.6M8 7.8H10.6M8 12.8H10.6" stroke="#2b3f8f"/><rect x="10.6" y="1.3" width="3" height="3" rx="0.8" stroke="#2b3f8f"/><rect x="10.6" y="6.3" width="3" height="3" rx="0.8" stroke="#2b3f8f"/><rect x="10.6" y="11.3" width="3" height="3" rx="0.8" stroke="#2b3f8f"/></g></svg>
<span style="top:65.04px;height:14px;line-height:14px;font-size:9.4px;color:#26305c;white-space:pre;left:28.3px;transform:scaleX(0.89);transform-origin:0 50%;">Used in Docs</span>
<svg style="left:7.7px;top:87.57px;" width="17" height="17" viewBox="0 0 16 16"><g fill="none" stroke-width="1.5"><path d="M6.6 2.4L8.2 1.5V5.2M6.4 5.4H10" stroke="#2b3f8f"/><path d="M2.8 7.3H6.8L3 10.7H7.2" stroke="#2b3f8f" stroke-linejoin="round"/><path d="M8.8 7.3H12.6V10.7H8.8M10 9H12.6" stroke="#4a7de0"/><path d="M1.1 14.8V13.1H14.9V14.8M8 13.1V14.6" stroke="#2b3f8f" stroke-width="1.2"/></g></svg>
<span style="top:89.07px;height:14px;line-height:14px;font-size:9.4px;color:#383d55;white-space:pre;left:28.3px;transform:scaleX(0.89);transform-origin:0 50%;">Serials on Hand</span>
<svg style="left:7.7px;top:111.60000000000002px;" width="17" height="17" viewBox="0 0 16 16"><g fill="none" stroke-width="1.5"><path d="M6.6 2.4L8.2 1.5V5.2M6.4 5.4H10" stroke="#4a7de0"/><path d="M2.8 7.3H6.8L3 10.7H7.2" stroke="#4a7de0" stroke-linejoin="round"/><path d="M8.8 7.3H12.6V10.7H8.8M10 9H12.6" stroke="#4a7de0"/><path d="M1.1 14.8V13.1H14.9V14.8M8 13.1V14.6" stroke="#2b3f8f" stroke-width="1.2"/></g></svg>
<span style="top:113.10px;height:14px;line-height:14px;font-size:9.4px;color:#383d55;white-space:pre;left:28.3px;transform:scaleX(0.89);transform-origin:0 50%;">Uniques On Hand</span>
<svg style="left:7.7px;top:135.63px;" width="17" height="17" viewBox="0 0 16 16"><g fill="none" stroke-width="1.3"><path d="M9 14H2.8V1.6H8.6L11.8 4.8V8" stroke="#2b3f8f" stroke-linejoin="round"/><path d="M8.4 1.8V5H11.6" stroke="#2b3f8f" stroke-width="1"/><path d="M4.6 7.6H9M4.6 9.6H8M4.6 11.6H7.4" stroke="#2b3f8f" stroke-width="1"/><circle cx="10.8" cy="11" r="2" stroke="#4a7de0"/><path d="M12.3 12.5L14.4 14.6" stroke="#4a7de0"/></g></svg>
<span style="top:137.13px;height:14px;line-height:14px;font-size:9.4px;color:#383d55;white-space:pre;left:28.3px;transform:scaleX(0.89);transform-origin:0 50%;">Stock Inquiry &gt;</span>
<svg style="left:7.7px;top:159.66000000000003px;" width="17" height="17" viewBox="0 0 16 16"><g fill="none" stroke-width="1.3"><path d="M9 14H2.8V1.6H8.6L11.8 4.8V8" stroke="#2b3f8f" stroke-linejoin="round"/><path d="M8.4 1.8V5H11.6" stroke="#2b3f8f" stroke-width="1"/><path d="M4.6 7.6H9M4.6 9.6H8M4.6 11.6H7.4" stroke="#2b3f8f" stroke-width="1"/><circle cx="10.8" cy="11" r="2" stroke="#4a7de0"/><path d="M12.3 12.5L14.4 14.6" stroke="#4a7de0"/></g></svg>
<span style="top:161.16px;height:14px;line-height:14px;font-size:9.4px;color:#383d55;white-space:pre;left:28.3px;transform:scaleX(0.89);transform-origin:0 50%;">Plant Inquiry &gt;</span>
<svg style="left:7.7px;top:183.69px;" width="17" height="17" viewBox="0 0 16 16"><g fill="none" stroke-width="1.3"><path d="M8 12.8H1.6V2.4H14.4V8" stroke="#2b3f8f"/><path d="M1.6 4.8H14.4" stroke="#2b3f8f"/><path d="M3.6 7.6H8.4M3.6 10H7" stroke="#2b3f8f" stroke-width="1.1"/><circle cx="10.8" cy="10.8" r="2.1" stroke="#4a7de0"/><path d="M12.4 12.4L14.6 14.6" stroke="#4a7de0"/></g></svg>
<span style="top:185.19px;height:14px;line-height:14px;font-size:9.4px;color:#383d55;white-space:pre;left:28.3px;transform:scaleX(0.89);transform-origin:0 50%;">Store Inquiry &gt;</span>
<svg style="left:7.7px;top:207.72000000000003px;" width="17" height="17" viewBox="0 0 16 16"><g fill="none" stroke-width="1.3"><path d="M1.6 2H14.4V11.2H6L3.2 13.8V11.2H1.6Z" stroke="#2b3f8f" stroke-linejoin="round"/><path d="M4.4 5.2H11.6M4.4 7.8H9.6" stroke="#4a7de0" stroke-width="1.1"/></g></svg>
<span style="top:209.22px;height:14px;line-height:14px;font-size:9.4px;color:#383d55;white-space:pre;left:28.3px;transform:scaleX(0.89);transform-origin:0 50%;">Comms</span>
<svg style="left:7.7px;top:231.75px;" width="17" height="17" viewBox="0 0 16 16"><path d="M10.9 4.4V11.6A2.9 2.9 0 0 1 5.1 11.600V3.9A2 2 0 0 1 9.1 3.900V11.2A1 1 0 0 1 7.100 11.2V4.600" fill="none" stroke="#2b3f8f" stroke-width="1.25" stroke-linecap="round"/></svg>
<span style="top:233.25px;height:14px;line-height:14px;font-size:9.4px;color:#383d55;white-space:pre;left:28.3px;transform:scaleX(0.89);transform-origin:0 50%;">Attachments</span>
<svg style="left:8.3px;top:256.28000000000003px;" width="16" height="16" viewBox="0 0 17 16"><g fill="#2b3f8f"><rect x="0.4" y="3" width="1.4" height="10"/><rect x="2.8" y="3" width="0.8" height="10"/><rect x="4.4" y="3" width="1.8" height="8.6"/><rect x="7" y="3" width="0.8" height="8.6"/><rect x="8.6" y="3" width="1.6" height="8.6"/><rect x="11" y="3" width="0.8" height="8.6"/><rect x="12.6" y="3" width="1.2" height="10"/><rect x="14.6" y="3" width="1.6" height="10"/></g></svg>
<span style="top:257.28px;height:14px;line-height:14px;font-size:9.4px;color:#383d55;white-space:pre;left:28.3px;transform:scaleX(0.89);transform-origin:0 50%;">Generate Barcodes</span>
<svg style="left:7.7px;top:279.81px;" width="17" height="17" viewBox="0 0 16 16"><g fill="none" stroke-width="1.1"><rect x="1.2" y="1.8" width="2.8" height="2.8" stroke="#4a7de0"/><rect x="1.2" y="6.6" width="2.8" height="2.8" stroke="#4a7de0"/><rect x="1.2" y="11.4" width="2.8" height="2.8" stroke="#4a7de0"/><path d="M6 3.2H15M6 8H15M6 12.8H15" stroke="#2b3f8f" stroke-width="1.4"/></g></svg>
<span style="top:281.31px;height:14px;line-height:14px;font-size:9.4px;color:#383d55;white-space:pre;left:28.3px;transform:scaleX(0.89);transform-origin:0 50%;">User Fields</span>
<div style="left:3.2px;top:286.41px;width:3.4px;height:3.4px;background:#e64a45;border-radius:1.7px;"></div>
<svg style="left:7.7px;top:303.84px;" width="17" height="17" viewBox="0 0 16 16"><g fill="none" stroke-width="1.5"><path d="M6.6 2.4L8.2 1.5V5.2M6.4 5.4H10" stroke="#2b3f8f"/><path d="M2.8 7.3H6.8L3 10.7H7.2" stroke="#2b3f8f" stroke-linejoin="round"/><path d="M8.8 7.3H12.6V10.7H8.8M10 9H12.6" stroke="#4a7de0"/><path d="M1.1 14.8V13.1H14.9V14.8M8 13.1V14.6" stroke="#2b3f8f" stroke-width="1.2"/></g></svg>
<span style="top:305.34px;height:14px;line-height:14px;font-size:9.4px;color:#383d55;white-space:pre;left:28.3px;transform:scaleX(0.89);transform-origin:0 50%;">Batches</span>
<svg style="left:7.7px;top:327.87px;" width="17" height="17" viewBox="0 0 16 16"><g fill="none" stroke-width="1.3"><path d="M2 13L12.6 2.6M8.4 2.2H13V6.8" stroke="#2b3f8f"/><path d="M2.4 3L6 6.6M9 9.6L13 13.4M13.2 9.6V13.6H9.2" stroke="#4a7de0"/></g></svg>
<span style="top:329.37px;height:14px;line-height:14px;font-size:9.4px;color:#383d55;white-space:pre;left:28.3px;transform:scaleX(0.89);transform-origin:0 50%;">LincClnts</span>
</div>
<svg style="left:112px;top:89px;" width="9" height="7" viewBox="0 0 9 7"><path d="M1.4 5.2L4.3 2.2L7.2 5.2" fill="none" stroke="#a9b8e6" stroke-width="1"/></svg>
<svg style="left:112px;top:430px;" width="9" height="7" viewBox="0 0 9 7"><path d="M1.4 1.8L4.3 4.8L7.2 1.8" fill="none" stroke="#a9b8e6" stroke-width="1"/></svg>
<div style="left:113.8px;top:97px;width:3.9px;height:332px;background:#dcdcdc;"></div>
<div style="left:113.7px;top:215px;width:4px;height:203px;background:#a9b5dc;"></div>
<div style="left:0px;top:26px;width:1.2px;height:519px;background:#dfe3f0;"></div>
<div style="left:8px;top:444px;width:107px;height:14.6px;background:#fff;border:1px solid #b4c0e6;box-sizing:border-box;border-radius:7.3px;"></div>
<svg style="left:15.3px;top:446.6px;" width="10" height="10" viewBox="0 0 10 10"><g fill="none" stroke="#2b3f8f" stroke-width="1.5" stroke-linecap="round"><circle cx="4.1" cy="4.1" r="2.7"/><path d="M6.3 6.3L8.8 8.8"/></g></svg>
<div style="left:1.2px;top:466px;width:120.3px;height:77.5px;background:#eef1fb;border-top:1px solid #c6d1f3;box-sizing:border-box;"></div>
<span style="top:472.80px;height:14px;line-height:14px;font-size:8.1px;color:#2e3350;white-space:pre;left:12.6px;transform:scaleX(0.89);transform-origin:0 50%;">ABL, InvtUpdate2</span>
<span style="top:485.30px;height:14px;line-height:14px;font-size:8.1px;color:#2e3350;white-space:pre;left:12.6px;transform:scaleX(0.89);transform-origin:0 50%;">Updated: 12 Aug 2024 by ABL</span>
<span style="top:497.80px;height:14px;line-height:14px;font-size:8.1px;color:#2e3350;white-space:pre;left:12.6px;transform:scaleX(0.89);transform-origin:0 50%;">INVT   Ver 7.0.25.090</span>
<div style="left:15px;top:517.6px;width:58.4px;height:18.2px;background:#f4f6fd;border:1px solid #b9c4e8;box-sizing:border-box;border-radius:9.1px;"></div>
<span style="top:519.80px;height:14px;line-height:14px;font-size:9.6px;color:#262b45;white-space:pre;left:-155.8px;width:400px;text-align:center;transform:scaleX(0.89);transform-origin:50% 50%;">Sign Out</span>
<div style="left:79px;top:517.6px;width:18.2px;height:18.2px;background:#f4f6fd;border:1px solid #b9c4e8;box-sizing:border-box;border-radius:9.1px;"></div>
<svg style="left:83px;top:521.6px;" width="10" height="10" viewBox="0 0 10 10"><g fill="none" stroke="#2b3f8f" stroke-width="1.2"><path d="M1 3.4V1H3.4M6.6 1H9V3.4M9 6.6V9H6.6M3.4 9H1V6.6"/><circle cx="5" cy="5" r="1.9"/></g></svg>
<div style="left:0px;top:542.8px;width:1024px;height:2.2px;background:#d6d8e3;"></div>
<div style="left:129.8px;top:75px;width:885px;height:460.3px;background:#ffffff;border-radius:5px;"></div>
<div style="left:137.5px;top:94.2px;width:114.0px;height:14.2px;background:#f9fafe;border:1px solid #b7c3e8;box-sizing:border-box;border-radius:3px;"></div>
<span style="top:81.90px;height:14px;line-height:14px;font-size:7.9px;color:#4660b1;white-space:pre;font-weight:bold;text-shadow:none;left:141.8px;transform:scaleX(0.88);transform-origin:0 50%;">Display Inventories</span>
<span style="top:93.90px;height:14px;line-height:14px;font-size:9.5px;color:#1e2233;white-space:pre;left:140.1px;transform:scaleX(0.89);transform-origin:0 50%;">Show Stock</span>
<svg style="left:238.5px;top:98.1px;" width="8" height="6" viewBox="0 0 8 6"><path d="M1.2 1.4L4 4.3L6.8 1.4" fill="none" stroke="#2b3f8f" stroke-width="1.2"/></svg>
<div style="left:255.2px;top:94.2px;width:124.60000000000002px;height:14.2px;background:#f9fafe;border:1px solid #b7c3e8;box-sizing:border-box;border-radius:3px;"></div>
<span style="top:81.90px;height:14px;line-height:14px;font-size:7.9px;color:#4660b1;white-space:pre;font-weight:bold;text-shadow:none;left:259.5px;transform:scaleX(0.88);transform-origin:0 50%;">Inventory Item Code</span>
<span style="top:93.90px;height:14px;line-height:14px;font-size:9.5px;color:#1e2233;white-space:pre;left:257.8px;transform:scaleX(0.89);transform-origin:0 50%;">60021</span>
<svg style="left:368.5px;top:95.5px;" width="4" height="11" viewBox="0 0 4 11"><g fill="#2b3f8f"><circle cx="2" cy="2.2" r="1"/><circle cx="2" cy="5.5" r="1"/><circle cx="2" cy="8.8" r="1"/></g></svg>
<div style="left:383.4px;top:94.2px;width:199.20000000000005px;height:14.2px;background:#f9fafe;border:1px solid #b7c3e8;box-sizing:border-box;border-radius:3px;"></div>
<span style="top:81.90px;height:14px;line-height:14px;font-size:7.9px;color:#4660b1;white-space:pre;font-weight:bold;text-shadow:none;left:387.7px;transform:scaleX(0.88);transform-origin:0 50%;">Inventory Item Description</span>
<span style="top:93.90px;height:14px;line-height:14px;font-size:9.5px;color:#1e2233;white-space:pre;left:386.0px;transform:scaleX(0.89);transform-origin:0 50%;">4-Switch Grey Waterproof</span>
<div style="left:585.9px;top:94.2px;width:88.70000000000005px;height:14.2px;background:#f9fafe;border:1px solid #b7c3e8;box-sizing:border-box;border-radius:3px;"></div>
<span style="top:81.90px;height:14px;line-height:14px;font-size:7.9px;color:#4660b1;white-space:pre;font-weight:bold;text-shadow:none;left:590.1999999999999px;transform:scaleX(0.88);transform-origin:0 50%;">Item Category</span>
<span style="top:93.90px;height:14px;line-height:14px;font-size:9.5px;color:#1e2233;white-space:pre;left:588.5px;transform:scaleX(0.89);transform-origin:0 50%;">Stock</span>
<svg style="left:661.4px;top:96.89999999999999px;" width="10" height="8" viewBox="0 0 10 8"><g stroke="#2b3f8f" stroke-width="1.1"><path d="M3 1.2H9.6M3 4H9.6M3 6.8H9.6"/><path d="M0.6 1.2H1.8M0.6 4H1.8M0.6 6.8H1.8"/></g></svg>
<div style="left:678.1px;top:94.2px;width:47.5px;height:14.2px;background:#f9fafe;border:1px solid #b7c3e8;box-sizing:border-box;border-radius:3px;"></div>
<span style="top:81.90px;height:14px;line-height:14px;font-size:7.9px;color:#4660b1;white-space:pre;font-weight:bold;text-shadow:none;left:682.4px;transform:scaleX(0.88);transform-origin:0 50%;">Line Type</span>
<span style="top:93.90px;height:14px;line-height:14px;font-size:9.5px;color:#1e2233;white-space:pre;left:680.7px;transform:scaleX(0.89);transform-origin:0 50%;">Stck</span>
<svg style="left:712.6px;top:98.1px;" width="8" height="6" viewBox="0 0 8 6"><path d="M1.2 1.4L4 4.3L6.8 1.4" fill="none" stroke="#2b3f8f" stroke-width="1.2"/></svg>
<div style="left:729.2px;top:94.2px;width:42.09999999999991px;height:14.2px;background:#f9fafe;border:1px solid #b7c3e8;box-sizing:border-box;border-radius:3px;"></div>
<span style="top:81.90px;height:14px;line-height:14px;font-size:7.9px;color:#4660b1;white-space:pre;font-weight:bold;text-shadow:none;left:733.5px;transform:scaleX(0.88);transform-origin:0 50%;">ItemTrak</span>
<span style="top:93.90px;height:14px;line-height:14px;font-size:9.5px;color:#1e2233;white-space:pre;left:731.8000000000001px;transform:scaleX(0.89);transform-origin:0 50%;">No</span>
<svg style="left:758.3px;top:98.1px;" width="8" height="6" viewBox="0 0 8 6"><path d="M1.2 1.4L4 4.3L6.8 1.4" fill="none" stroke="#2b3f8f" stroke-width="1.2"/></svg>
<div style="left:774.9px;top:94.2px;width:41.700000000000045px;height:14.2px;background:#f9fafe;border:1px solid #b7c3e8;box-sizing:border-box;border-radius:3px;"></div>
<span style="top:81.90px;height:14px;line-height:14px;font-size:7.9px;color:#4660b1;white-space:pre;font-weight:bold;text-shadow:none;left:779.1999999999999px;transform:scaleX(0.88);transform-origin:0 50%;">TrakCost</span>
<span style="top:93.90px;height:14px;line-height:14px;font-size:9.5px;color:#1e2233;white-space:pre;left:777.5px;transform:scaleX(0.89);transform-origin:0 50%;">No</span>
<svg style="left:803.6px;top:98.1px;" width="8" height="6" viewBox="0 0 8 6"><path d="M1.2 1.4L4 4.3L6.8 1.4" fill="none" stroke="#2b3f8f" stroke-width="1.2"/></svg>
<div style="left:820.3px;top:94.2px;width:40.200000000000045px;height:14.2px;background:#f9fafe;border:1px solid #b7c3e8;box-sizing:border-box;border-radius:3px;"></div>
<span style="top:81.90px;height:14px;line-height:14px;font-size:7.9px;color:#4660b1;white-space:pre;font-weight:bold;text-shadow:none;left:824.5999999999999px;transform:scaleX(0.88);transform-origin:0 50%;">Reserve</span>
<span style="top:93.90px;height:14px;line-height:14px;font-size:9.5px;color:#1e2233;white-space:pre;left:822.9px;transform:scaleX(0.89);transform-origin:0 50%;">No</span>
<svg style="left:847.5px;top:98.1px;" width="8" height="6" viewBox="0 0 8 6"><path d="M1.2 1.4L4 4.3L6.8 1.4" fill="none" stroke="#2b3f8f" stroke-width="1.2"/></svg>
<div style="left:864.3px;top:94.2px;width:52.10000000000002px;height:14.2px;background:#f9fafe;border:1px solid #b7c3e8;box-sizing:border-box;border-radius:3px;"></div>
<span style="top:81.90px;height:14px;line-height:14px;font-size:7.9px;color:#4660b1;white-space:pre;font-weight:bold;text-shadow:none;left:868.5999999999999px;transform:scaleX(0.88);transform-origin:0 50%;">Use Mpid</span>
<svg style="left:903.4px;top:98.1px;" width="8" height="6" viewBox="0 0 8 6"><path d="M1.2 1.4L4 4.3L6.8 1.4" fill="none" stroke="#2b3f8f" stroke-width="1.2"/></svg>
<div style="left:920px;top:94.2px;width:86.79999999999995px;height:14.2px;background:#f9fafe;border:1px solid #b7c3e8;box-sizing:border-box;border-radius:3px;"></div>
<svg style="left:995.5px;top:95.5px;" width="4" height="11" viewBox="0 0 4 11"><g fill="#2b3f8f"><circle cx="2" cy="2.2" r="1"/><circle cx="2" cy="5.5" r="1"/><circle cx="2" cy="8.8" r="1"/></g></svg>
<span style="top:81.90px;height:14px;line-height:14px;font-size:7.9px;color:#4660b1;white-space:pre;font-weight:bold;text-shadow:none;left:936px;transform:scaleX(0.88);transform-origin:0 50%;">View  Coy / Dept</span>
<span style="top:93.90px;height:14px;line-height:14px;font-size:9.5px;color:#1e2233;white-space:pre;left:935.3px;transform:scaleX(0.835);transform-origin:0 50%;">ABC</span>
<span style="top:93.90px;height:14px;line-height:14px;font-size:9.5px;color:#9aa3c4;white-space:pre;left:954.4px;transform:scaleX(0.89);transform-origin:0 50%;">/</span>
<span style="top:93.90px;height:14px;line-height:14px;font-size:9.5px;color:#1e2233;white-space:pre;left:958.2px;transform:scaleX(0.835);transform-origin:0 50%;">WHSE</span>
<div style="left:137.5px;top:124.2px;width:113.30000000000001px;height:14.2px;background:#f9fafe;border:1px solid #b7c3e8;box-sizing:border-box;border-radius:3px;"></div>
<span style="top:111.90px;height:14px;line-height:14px;font-size:7.9px;color:#4660b1;white-space:pre;font-weight:bold;text-shadow:none;left:141.8px;transform:scaleX(0.88);transform-origin:0 50%;">Inventory Group Code</span>
<span style="top:123.90px;height:14px;line-height:14px;font-size:9.5px;color:#1e2233;white-space:pre;left:140.1px;transform:scaleX(0.89);transform-origin:0 50%;">Finished Goods</span>
<svg style="left:239.5px;top:125.5px;" width="4" height="11" viewBox="0 0 4 11"><g fill="#2b3f8f"><circle cx="2" cy="2.2" r="1"/><circle cx="2" cy="5.5" r="1"/><circle cx="2" cy="8.8" r="1"/></g></svg>
<div style="left:254.3px;top:124.2px;width:127.0px;height:14.2px;background:#f9fafe;border:1px solid #b7c3e8;box-sizing:border-box;border-radius:3px;"></div>
<span style="top:111.90px;height:14px;line-height:14px;font-size:7.9px;color:#4660b1;white-space:pre;font-weight:bold;text-shadow:none;left:258.6px;transform:scaleX(0.88);transform-origin:0 50%;">Inventory Category</span>
<span style="top:123.90px;height:14px;line-height:14px;font-size:9.5px;color:#1e2233;white-space:pre;left:256.90000000000003px;transform:scaleX(0.89);transform-origin:0 50%;">Dry Goods</span>
<svg style="left:370.0px;top:125.5px;" width="4" height="11" viewBox="0 0 4 11"><g fill="#2b3f8f"><circle cx="2" cy="2.2" r="1"/><circle cx="2" cy="5.5" r="1"/><circle cx="2" cy="8.8" r="1"/></g></svg>
<div style="left:384.9px;top:124.2px;width:101.10000000000002px;height:14.2px;background:#f9fafe;border:1px solid #b7c3e8;box-sizing:border-box;border-radius:3px;"></div>
<span style="top:111.90px;height:14px;line-height:14px;font-size:7.9px;color:#4660b1;white-space:pre;font-weight:bold;text-shadow:none;left:389.2px;transform:scaleX(0.88);transform-origin:0 50%;">Inventory Style</span>
<span style="top:123.90px;height:14px;line-height:14px;font-size:9.5px;color:#1e2233;white-space:pre;left:387.5px;transform:scaleX(0.89);transform-origin:0 50%;">Round</span>
<svg style="left:474.5px;top:125.5px;" width="4" height="11" viewBox="0 0 4 11"><g fill="#2b3f8f"><circle cx="2" cy="2.2" r="1"/><circle cx="2" cy="5.5" r="1"/><circle cx="2" cy="8.8" r="1"/></g></svg>
<div style="left:489.4px;top:124.2px;width:91.60000000000002px;height:14.2px;background:#f9fafe;border:1px solid #b7c3e8;box-sizing:border-box;border-radius:3px;"></div>
<span style="top:111.90px;height:14px;line-height:14px;font-size:7.9px;color:#4660b1;white-space:pre;font-weight:bold;text-shadow:none;left:493.7px;transform:scaleX(0.88);transform-origin:0 50%;">Inventory Brand</span>
<svg style="left:569.5px;top:125.5px;" width="4" height="11" viewBox="0 0 4 11"><g fill="#2b3f8f"><circle cx="2" cy="2.2" r="1"/><circle cx="2" cy="5.5" r="1"/><circle cx="2" cy="8.8" r="1"/></g></svg>
<div style="left:584.6px;top:124.2px;width:88.60000000000002px;height:14.2px;background:#e5e8f3;border-radius:2.5px;"></div>
<span style="top:111.90px;height:14px;line-height:14px;font-size:7.9px;color:#4660b1;white-space:pre;font-weight:bold;text-shadow:none;left:588.9px;transform:scaleX(0.88);transform-origin:0 50%;">Default Bin Code</span>
<span style="top:123.90px;height:14px;line-height:14px;font-size:9.5px;color:#4a64b0;white-space:pre;left:587.2px;transform:scaleX(0.89);transform-origin:0 50%;">Default</span>
<div style="left:676.5px;top:124.2px;width:68.10000000000002px;height:14.2px;background:#f9fafe;border:1px solid #b7c3e8;box-sizing:border-box;border-radius:3px;"></div>
<span style="top:111.90px;height:14px;line-height:14px;font-size:7.9px;color:#4660b1;white-space:pre;font-weight:bold;text-shadow:none;left:680.8px;transform:scaleX(0.88);transform-origin:0 50%;">Stock Control</span>
<span style="top:123.90px;height:14px;line-height:14px;font-size:9.5px;color:#1e2233;white-space:pre;left:679.1px;transform:scaleX(0.89);transform-origin:0 50%;">StdCost</span>
<svg style="left:731.6px;top:128.1px;" width="8" height="6" viewBox="0 0 8 6"><path d="M1.2 1.4L4 4.3L6.8 1.4" fill="none" stroke="#2b3f8f" stroke-width="1.2"/></svg>
<div style="left:748.2px;top:124.2px;width:39.299999999999955px;height:14.2px;background:#f9fafe;border:1px solid #b7c3e8;box-sizing:border-box;border-radius:3px;"></div>
<span style="top:111.90px;height:14px;line-height:14px;font-size:7.9px;color:#4660b1;white-space:pre;font-weight:bold;text-shadow:none;left:752.5px;transform:scaleX(0.88);transform-origin:0 50%;">MRP</span>
<span style="top:123.90px;height:14px;line-height:14px;font-size:9.5px;color:#1e2233;white-space:pre;left:750.8000000000001px;transform:scaleX(0.89);transform-origin:0 50%;">Yes</span>
<svg style="left:774.5px;top:128.1px;" width="8" height="6" viewBox="0 0 8 6"><path d="M1.2 1.4L4 4.3L6.8 1.4" fill="none" stroke="#2b3f8f" stroke-width="1.2"/></svg>
<div style="left:791px;top:124.2px;width:39px;height:14.2px;background:#f9fafe;border:1px solid #b7c3e8;box-sizing:border-box;border-radius:3px;"></div>
<span style="top:111.90px;height:14px;line-height:14px;font-size:7.9px;color:#4660b1;white-space:pre;font-weight:bold;text-shadow:none;left:795.3px;transform:scaleX(0.88);transform-origin:0 50%;">Consume</span>
<span style="top:123.90px;height:14px;line-height:14px;font-size:9.5px;color:#1e2233;white-space:pre;left:793.6px;transform:scaleX(0.89);transform-origin:0 50%;">No</span>
<svg style="left:817px;top:128.1px;" width="8" height="6" viewBox="0 0 8 6"><path d="M1.2 1.4L4 4.3L6.8 1.4" fill="none" stroke="#2b3f8f" stroke-width="1.2"/></svg>
<div style="left:833.7px;top:124.2px;width:38.799999999999955px;height:14.2px;background:#f9fafe;border:1px solid #b7c3e8;box-sizing:border-box;border-radius:3px;"></div>
<span style="top:111.90px;height:14px;line-height:14px;font-size:7.9px;color:#4660b1;white-space:pre;font-weight:bold;text-shadow:none;left:838.0px;transform:scaleX(0.88);transform-origin:0 50%;">Bin Reqd</span>
<span style="top:123.90px;height:14px;line-height:14px;font-size:9.5px;color:#1e2233;white-space:pre;left:836.3000000000001px;transform:scaleX(0.89);transform-origin:0 50%;">Yes</span>
<svg style="left:859.5px;top:128.1px;" width="8" height="6" viewBox="0 0 8 6"><path d="M1.2 1.4L4 4.3L6.8 1.4" fill="none" stroke="#2b3f8f" stroke-width="1.2"/></svg>
<div style="left:876.3px;top:124.2px;width:39.10000000000002px;height:14.2px;background:#f9fafe;border:1px solid #b7c3e8;box-sizing:border-box;border-radius:3px;"></div>
<span style="top:111.90px;height:14px;line-height:14px;font-size:7.9px;color:#4660b1;white-space:pre;font-weight:bold;text-shadow:none;left:880.5999999999999px;transform:scaleX(0.88);transform-origin:0 50%;">Frozen</span>
<span style="top:123.90px;height:14px;line-height:14px;font-size:9.5px;color:#1e2233;white-space:pre;left:878.9px;transform:scaleX(0.89);transform-origin:0 50%;">No</span>
<svg style="left:902.4px;top:128.1px;" width="8" height="6" viewBox="0 0 8 6"><path d="M1.2 1.4L4 4.3L6.8 1.4" fill="none" stroke="#2b3f8f" stroke-width="1.2"/></svg>
<div style="left:919.2px;top:124.2px;width:37.5px;height:14.2px;background:#f9fafe;border:1px solid #b7c3e8;box-sizing:border-box;border-radius:3px;"></div>
<span style="top:111.90px;height:14px;line-height:14px;font-size:7.9px;color:#4660b1;white-space:pre;font-weight:bold;text-shadow:none;left:923.5px;transform:scaleX(0.88);transform-origin:0 50%;">Use Days</span>
<div style="left:960.3px;top:124.2px;width:46.5px;height:14.2px;background:#f9fafe;border:1px solid #b7c3e8;box-sizing:border-box;border-radius:3px;"></div>
<span style="top:111.90px;height:14px;line-height:14px;font-size:7.9px;color:#4660b1;white-space:pre;font-weight:bold;text-shadow:none;left:964.2px;transform:scaleX(0.88);transform-origin:0 50%;">Close%</span>
<div style="left:137.5px;top:154.3px;width:114.19999999999999px;height:14.2px;background:#f9fafe;border:1px solid #b7c3e8;box-sizing:border-box;border-radius:3px;"></div>
<span style="top:142.00px;height:14px;line-height:14px;font-size:7.9px;color:#4660b1;white-space:pre;font-weight:bold;text-shadow:none;left:141.8px;transform:scaleX(0.88);transform-origin:0 50%;">Inventory Item Barcode</span>
<svg style="left:240.5px;top:155.5px;" width="4" height="11" viewBox="0 0 4 11"><g fill="#2b3f8f"><circle cx="2" cy="2.2" r="1"/><circle cx="2" cy="5.5" r="1"/><circle cx="2" cy="8.8" r="1"/></g></svg>
<div style="left:255.3px;top:154.3px;width:127.0px;height:14.2px;background:#f9fafe;border:1px solid #b7c3e8;box-sizing:border-box;border-radius:3px;"></div>
<span style="top:142.00px;height:14px;line-height:14px;font-size:7.9px;color:#4660b1;white-space:pre;font-weight:bold;text-shadow:none;left:259.6px;transform:scaleX(0.88);transform-origin:0 50%;">Default Supplier</span>
<span style="top:154.00px;height:14px;line-height:14px;font-size:9.5px;color:#1e2233;white-space:pre;left:257.90000000000003px;transform:scaleX(0.835);transform-origin:0 50%;">ACARLOS</span>
<svg style="left:371.0px;top:155.5px;" width="4" height="11" viewBox="0 0 4 11"><g fill="#2b3f8f"><circle cx="2" cy="2.2" r="1"/><circle cx="2" cy="5.5" r="1"/><circle cx="2" cy="8.8" r="1"/></g></svg>
<div style="left:386px;top:154.3px;width:101.80000000000001px;height:14.2px;background:#f9fafe;border:1px solid #b7c3e8;box-sizing:border-box;border-radius:3px;"></div>
<span style="top:142.00px;height:14px;line-height:14px;font-size:7.9px;color:#4660b1;white-space:pre;font-weight:bold;text-shadow:none;left:390.3px;transform:scaleX(0.88);transform-origin:0 50%;">Bill Of Materials Code</span>
<svg style="left:476.5px;top:155.5px;" width="4" height="11" viewBox="0 0 4 11"><g fill="#2b3f8f"><circle cx="2" cy="2.2" r="1"/><circle cx="2" cy="5.5" r="1"/><circle cx="2" cy="8.8" r="1"/></g></svg>
<div style="left:491.4px;top:154.3px;width:92.20000000000005px;height:14.2px;background:#f9fafe;border:1px solid #b7c3e8;box-sizing:border-box;border-radius:3px;"></div>
<span style="top:142.00px;height:14px;line-height:14px;font-size:7.9px;color:#4660b1;white-space:pre;font-weight:bold;text-shadow:none;left:495.7px;transform:scaleX(0.88);transform-origin:0 50%;">MRP Bill Of Materials</span>
<svg style="left:572.0px;top:155.5px;" width="4" height="11" viewBox="0 0 4 11"><g fill="#2b3f8f"><circle cx="2" cy="2.2" r="1"/><circle cx="2" cy="5.5" r="1"/><circle cx="2" cy="8.8" r="1"/></g></svg>
<div style="left:587.2px;top:154.3px;width:43.59999999999991px;height:14.2px;background:#f9fafe;border:1px solid #b7c3e8;box-sizing:border-box;border-radius:3px;"></div>
<span style="top:142.00px;height:14px;line-height:14px;font-size:7.9px;color:#4660b1;white-space:pre;font-weight:bold;text-shadow:none;left:591.5px;transform:scaleX(0.88);transform-origin:0 50%;">Unit Take</span>
<span style="top:154.00px;height:14px;line-height:14px;font-size:9.5px;color:#1e2233;white-space:pre;left:589.8000000000001px;transform:scaleX(0.89);transform-origin:0 50%;">Ea</span>
<svg style="left:617.8px;top:158.2px;" width="8" height="6" viewBox="0 0 8 6"><path d="M1.2 1.4L4 4.3L6.8 1.4" fill="none" stroke="#2b3f8f" stroke-width="1.2"/></svg>
<div style="left:634.4px;top:154.3px;width:43.89999999999998px;height:14.2px;background:#f9fafe;border:1px solid #b7c3e8;box-sizing:border-box;border-radius:3px;"></div>
<span style="top:142.00px;height:14px;line-height:14px;font-size:7.9px;color:#4660b1;white-space:pre;font-weight:bold;text-shadow:none;left:638.6999999999999px;transform:scaleX(0.88);transform-origin:0 50%;">Unit Stock</span>
<span style="top:154.00px;height:14px;line-height:14px;font-size:9.5px;color:#1e2233;white-space:pre;left:637.0px;transform:scaleX(0.89);transform-origin:0 50%;">Ea</span>
<svg style="left:665.3px;top:158.2px;" width="8" height="6" viewBox="0 0 8 6"><path d="M1.2 1.4L4 4.3L6.8 1.4" fill="none" stroke="#2b3f8f" stroke-width="1.2"/></svg>
<div style="left:682.2px;top:154.3px;width:43.39999999999998px;height:14.2px;background:#f9fafe;border:1px solid #b7c3e8;box-sizing:border-box;border-radius:3px;"></div>
<span style="top:142.00px;height:14px;line-height:14px;font-size:7.9px;color:#4660b1;white-space:pre;font-weight:bold;text-shadow:none;left:686.5px;transform:scaleX(0.88);transform-origin:0 50%;">Unit Size</span>
<span style="top:154.00px;height:14px;line-height:14px;font-size:9.5px;color:#aab0c6;white-space:pre;left:684.8000000000001px;transform:scaleX(0.89);transform-origin:0 50%;">Ea</span>
<svg style="left:712.6px;top:158.2px;" width="8" height="6" viewBox="0 0 8 6"><path d="M1.2 1.4L4 4.3L6.8 1.4" fill="none" stroke="#7d88ad" stroke-width="1.2"/></svg>
<div style="left:729.4px;top:154.3px;width:43.89999999999998px;height:14.2px;background:#e5e8f3;border-radius:2.5px;"></div>
<span style="top:142.00px;height:14px;line-height:14px;font-size:7.9px;color:#4660b1;white-space:pre;font-weight:bold;text-shadow:none;left:733.6999999999999px;transform:scaleX(0.88);transform-origin:0 50%;">Currency</span>
<span style="top:154.00px;height:14px;line-height:14px;font-size:9.5px;color:#4a64b0;white-space:pre;left:732.0px;transform:scaleX(0.835);transform-origin:0 50%;">NZD</span>
<div style="left:777px;top:154.3px;width:59px;height:14.2px;background:#f9fafe;border:1px solid #b7c3e8;box-sizing:border-box;border-radius:3px;"></div>
<span style="top:142.00px;height:14px;line-height:14px;font-size:7.9px;color:#4660b1;white-space:pre;font-weight:bold;text-shadow:none;left:781.3px;transform:scaleX(0.88);transform-origin:0 50%;">Unit Cost</span>
<span style="top:154.00px;height:14px;line-height:14px;font-size:9.5px;color:#1e2233;white-space:pre;font-weight:bold;right:190.20000000000005px;transform:scaleX(0.89);transform-origin:100% 50%;">47.20</span>
<div style="left:839.6px;top:154.3px;width:40.60000000000002px;height:14.2px;background:#f9fafe;border:1px solid #b7c3e8;box-sizing:border-box;border-radius:3px;"></div>
<span style="top:142.00px;height:14px;line-height:14px;font-size:7.9px;color:#4660b1;white-space:pre;font-weight:bold;text-shadow:none;left:843.9px;transform:scaleX(0.88);transform-origin:0 50%;">Cost Taxt</span>
<span style="top:154.00px;height:14px;line-height:14px;font-size:9.5px;color:#1e2233;white-space:pre;left:842.2px;transform:scaleX(0.89);transform-origin:0 50%;">Excl</span>
<svg style="left:867.2px;top:158.2px;" width="8" height="6" viewBox="0 0 8 6"><path d="M1.2 1.4L4 4.3L6.8 1.4" fill="none" stroke="#2b3f8f" stroke-width="1.2"/></svg>
<div style="left:884.3px;top:154.3px;width:59.30000000000007px;height:14.2px;background:#f9fafe;border:1px solid #b7c3e8;box-sizing:border-box;border-radius:3px;"></div>
<span style="top:142.00px;height:14px;line-height:14px;font-size:7.9px;color:#4660b1;white-space:pre;font-weight:bold;text-shadow:none;left:888.5999999999999px;transform:scaleX(0.88);transform-origin:0 50%;">Unit Sell</span>
<span style="top:154.00px;height:14px;line-height:14px;font-size:9.5px;color:#1e2233;white-space:pre;font-weight:bold;right:82.60000000000002px;transform:scaleX(0.89);transform-origin:100% 50%;">4.248</span>
<div style="left:947.2px;top:154.3px;width:59.59999999999991px;height:14.2px;background:#f9fafe;border:1px solid #b7c3e8;box-sizing:border-box;border-radius:3px;"></div>
<span style="top:142.00px;height:14px;line-height:14px;font-size:7.9px;color:#4660b1;white-space:pre;font-weight:bold;text-shadow:none;left:951.5px;transform:scaleX(0.88);transform-origin:0 50%;">Sell Taxt</span>
<span style="top:154.00px;height:14px;line-height:14px;font-size:9.5px;color:#1e2233;white-space:pre;left:949.8000000000001px;transform:scaleX(0.89);transform-origin:0 50%;">Excl</span>
<svg style="left:993.8px;top:158.2px;" width="8" height="6" viewBox="0 0 8 6"><path d="M1.2 1.4L4 4.3L6.8 1.4" fill="none" stroke="#2b3f8f" stroke-width="1.2"/></svg>
<div style="left:138px;top:178.7px;width:856.4px;height:18px;background:#adb9e1;"></div>
<span style="top:180.50px;height:14px;line-height:14px;font-size:8.5px;color:#111426;white-space:pre;font-weight:bold;left:139.3px;transform:scaleX(0.88);transform-origin:0 50%;">Product Code</span>
<span style="top:180.50px;height:14px;line-height:14px;font-size:8.5px;color:#111426;white-space:pre;font-weight:bold;left:255.2px;transform:scaleX(0.88);transform-origin:0 50%;">Description</span>
<span style="top:180.50px;height:14px;line-height:14px;font-size:8.5px;color:#111426;white-space:pre;font-weight:bold;left:508px;transform:scaleX(0.88);transform-origin:0 50%;">GL Groups</span>
<span style="top:180.50px;height:14px;line-height:14px;font-size:8.5px;color:#111426;white-space:pre;font-weight:bold;left:408.5px;width:400px;text-align:center;transform:scaleX(0.88);transform-origin:50% 50%;">Supplier</span>
<span style="top:180.50px;height:14px;line-height:14px;font-size:8.5px;color:#111426;white-space:pre;font-weight:bold;left:451.79999999999995px;width:400px;text-align:center;transform:scaleX(0.88);transform-origin:50% 50%;">Units</span>
<span style="top:180.50px;height:14px;line-height:14px;font-size:8.5px;color:#111426;white-space:pre;font-weight:bold;right:296.5px;transform:scaleX(0.88);transform-origin:100% 50%;">Pal Con</span>
<span style="top:180.50px;height:14px;line-height:14px;font-size:8.5px;color:#111426;white-space:pre;font-weight:bold;right:240.79999999999995px;transform:scaleX(0.88);transform-origin:100% 50%;">Pallet Qty</span>
<span style="top:180.50px;height:14px;line-height:14px;font-size:8.5px;color:#111426;white-space:pre;font-weight:bold;right:185.70000000000005px;transform:scaleX(0.88);transform-origin:100% 50%;">On Hand</span>
<span style="top:180.50px;height:14px;line-height:14px;font-size:8.5px;color:#111426;white-space:pre;font-weight:bold;right:122px;transform:scaleX(0.88);transform-origin:100% 50%;">Unit Cost</span>
<span style="top:180.50px;height:14px;line-height:14px;font-size:8.5px;color:#111426;white-space:pre;font-weight:bold;right:58.700000000000045px;transform:scaleX(0.88);transform-origin:100% 50%;">Unit Sell</span>
<span style="top:180.50px;height:14px;line-height:14px;font-size:8.5px;color:#111426;white-space:pre;font-weight:bold;left:971.3px;transform:scaleX(0.88);transform-origin:0 50%;">Cury</span>
<span style="top:197.89px;height:14px;line-height:14px;font-size:9.5px;color:#171a2c;white-space:pre;left:139.3px;transform:scaleX(0.89);transform-origin:0 50%;">60020</span>
<span style="top:197.89px;height:14px;line-height:14px;font-size:9.5px;color:#171a2c;white-space:pre;left:255.2px;transform:scaleX(0.89);transform-origin:0 50%;">Limited Edition Combo</span>
<span style="top:197.89px;height:14px;line-height:14px;font-size:9.5px;color:#171a2c;white-space:pre;left:508px;transform:scaleX(0.89);transform-origin:0 50%;">Finished Goods</span>
<span style="top:197.89px;height:14px;line-height:14px;font-size:9.5px;color:#171a2c;white-space:pre;left:451.79999999999995px;width:400px;text-align:center;transform:scaleX(0.89);transform-origin:50% 50%;">Each</span>
<span style="top:197.89px;height:14px;line-height:14px;font-size:9.5px;color:#171a2c;white-space:pre;right:296.5px;transform:scaleX(0.89);transform-origin:100% 50%;">60.00</span>
<span style="top:197.89px;height:14px;line-height:14px;font-size:9.5px;color:#171a2c;white-space:pre;right:240.79999999999995px;transform:scaleX(0.89);transform-origin:100% 50%;">6</span>
<span style="top:197.89px;height:14px;line-height:14px;font-size:9.5px;color:#171a2c;white-space:pre;right:185.70000000000005px;transform:scaleX(0.89);transform-origin:100% 50%;">6</span>
<span style="top:197.89px;height:14px;line-height:14px;font-size:9.5px;color:#171a2c;white-space:pre;right:122px;transform:scaleX(0.89);transform-origin:100% 50%;">28.7021</span>
<span style="top:197.89px;height:14px;line-height:14px;font-size:9.5px;color:#171a2c;white-space:pre;right:58.700000000000045px;transform:scaleX(0.89);transform-origin:100% 50%;">1200.00</span>
<span style="top:197.89px;height:14px;line-height:14px;font-size:9.5px;color:#171a2c;white-space:pre;left:971.3px;transform:scaleX(0.835);transform-origin:0 50%;">NZD</span>
<div style="left:138px;top:213.83px;width:856.4px;height:16.68px;background:#243a83;"></div>
<span style="top:214.57px;height:14px;line-height:14px;font-size:9.5px;color:#ffffff;white-space:pre;left:139.3px;transform:scaleX(0.89);transform-origin:0 50%;">60021</span>
<span style="top:214.57px;height:14px;line-height:14px;font-size:9.5px;color:#ffffff;white-space:pre;left:255.2px;transform:scaleX(0.89);transform-origin:0 50%;">4-Switch Grey Waterproof</span>
<span style="top:214.57px;height:14px;line-height:14px;font-size:9.5px;color:#ffffff;white-space:pre;left:508px;transform:scaleX(0.89);transform-origin:0 50%;">Finished Goods</span>
<span style="top:214.57px;height:14px;line-height:14px;font-size:9.5px;color:#ffffff;white-space:pre;left:408.5px;width:400px;text-align:center;transform:scaleX(0.835);transform-origin:50% 50%;">ACARLOS</span>
<span style="top:214.57px;height:14px;line-height:14px;font-size:9.5px;color:#ffffff;white-space:pre;left:451.79999999999995px;width:400px;text-align:center;transform:scaleX(0.89);transform-origin:50% 50%;">Ea</span>
<span style="top:214.57px;height:14px;line-height:14px;font-size:9.5px;color:#ffffff;white-space:pre;right:296.5px;transform:scaleX(0.89);transform-origin:100% 50%;">1</span>
<span style="top:214.57px;height:14px;line-height:14px;font-size:9.5px;color:#ffffff;white-space:pre;right:240.79999999999995px;transform:scaleX(0.89);transform-origin:100% 50%;">851</span>
<span style="top:214.57px;height:14px;line-height:14px;font-size:9.5px;color:#ffffff;white-space:pre;right:185.70000000000005px;transform:scaleX(0.89);transform-origin:100% 50%;">851</span>
<span style="top:214.57px;height:14px;line-height:14px;font-size:9.5px;color:#ffffff;white-space:pre;right:122px;transform:scaleX(0.89);transform-origin:100% 50%;">47.20</span>
<span style="top:214.57px;height:14px;line-height:14px;font-size:9.5px;color:#ffffff;white-space:pre;right:58.700000000000045px;transform:scaleX(0.89);transform-origin:100% 50%;">4.248</span>
<span style="top:214.57px;height:14px;line-height:14px;font-size:9.5px;color:#ffffff;white-space:pre;left:971.3px;transform:scaleX(0.835);transform-origin:0 50%;">NZD</span>
<span style="top:231.25px;height:14px;line-height:14px;font-size:9.5px;color:#171a2c;white-space:pre;left:139.3px;transform:scaleX(0.89);transform-origin:0 50%;">60022</span>
<span style="top:231.25px;height:14px;line-height:14px;font-size:9.5px;color:#171a2c;white-space:pre;left:255.2px;transform:scaleX(0.89);transform-origin:0 50%;">Universal Variety</span>
<span style="top:231.25px;height:14px;line-height:14px;font-size:9.5px;color:#171a2c;white-space:pre;left:508px;transform:scaleX(0.89);transform-origin:0 50%;">Finished Goods</span>
<span style="top:231.25px;height:14px;line-height:14px;font-size:9.5px;color:#171a2c;white-space:pre;left:408.5px;width:400px;text-align:center;transform:scaleX(0.835);transform-origin:50% 50%;">ACARLOS</span>
<span style="top:231.25px;height:14px;line-height:14px;font-size:9.5px;color:#171a2c;white-space:pre;left:451.79999999999995px;width:400px;text-align:center;transform:scaleX(0.89);transform-origin:50% 50%;">Each</span>
<span style="top:231.25px;height:14px;line-height:14px;font-size:9.5px;color:#171a2c;white-space:pre;right:296.5px;transform:scaleX(0.89);transform-origin:100% 50%;">60.00</span>
<span style="top:231.25px;height:14px;line-height:14px;font-size:9.5px;color:#171a2c;white-space:pre;right:240.79999999999995px;transform:scaleX(0.89);transform-origin:100% 50%;">-2</span>
<span style="top:231.25px;height:14px;line-height:14px;font-size:9.5px;color:#171a2c;white-space:pre;right:185.70000000000005px;transform:scaleX(0.89);transform-origin:100% 50%;">-2</span>
<span style="top:231.25px;height:14px;line-height:14px;font-size:9.5px;color:#171a2c;white-space:pre;right:122px;transform:scaleX(0.89);transform-origin:100% 50%;">22.11</span>
<span style="top:231.25px;height:14px;line-height:14px;font-size:9.5px;color:#171a2c;white-space:pre;right:58.700000000000045px;transform:scaleX(0.89);transform-origin:100% 50%;">120.00</span>
<span style="top:231.25px;height:14px;line-height:14px;font-size:9.5px;color:#171a2c;white-space:pre;left:971.3px;transform:scaleX(0.835);transform-origin:0 50%;">NZD</span>
<div style="left:138px;top:247.19px;width:856.4px;height:16.68px;background:#f0f2fb;"></div>
<span style="top:247.93px;height:14px;line-height:14px;font-size:9.5px;color:#171a2c;white-space:pre;left:139.3px;transform:scaleX(0.89);transform-origin:0 50%;">60030</span>
<span style="top:247.93px;height:14px;line-height:14px;font-size:9.5px;color:#171a2c;white-space:pre;left:255.2px;transform:scaleX(0.89);transform-origin:0 50%;">Vanilla(&#8776;=^-|| 7*Zh)</span>
<span style="top:247.93px;height:14px;line-height:14px;font-size:9.5px;color:#171a2c;white-space:pre;left:508px;transform:scaleX(0.89);transform-origin:0 50%;">Finished Goods</span>
<span style="top:247.93px;height:14px;line-height:14px;font-size:9.5px;color:#171a2c;white-space:pre;left:451.79999999999995px;width:400px;text-align:center;transform:scaleX(0.89);transform-origin:50% 50%;">Tray</span>
<span style="top:247.93px;height:14px;line-height:14px;font-size:9.5px;color:#171a2c;white-space:pre;right:296.5px;transform:scaleX(0.89);transform-origin:100% 50%;">45.00</span>
<span style="top:247.93px;height:14px;line-height:14px;font-size:9.5px;color:#171a2c;white-space:pre;right:122px;transform:scaleX(0.89);transform-origin:100% 50%;">405.5259</span>
<span style="top:247.93px;height:14px;line-height:14px;font-size:9.5px;color:#171a2c;white-space:pre;right:58.700000000000045px;transform:scaleX(0.89);transform-origin:100% 50%;">1.98</span>
<span style="top:247.93px;height:14px;line-height:14px;font-size:9.5px;color:#171a2c;white-space:pre;left:971.3px;transform:scaleX(0.835);transform-origin:0 50%;">NZD</span>
<span style="top:264.61px;height:14px;line-height:14px;font-size:9.5px;color:#171a2c;white-space:pre;left:139.3px;transform:scaleX(0.89);transform-origin:0 50%;">60030-DOC</span>
<div style="left:138px;top:280.55px;width:856.4px;height:16.68px;background:#f0f2fb;"></div>
<span style="top:281.29px;height:14px;line-height:14px;font-size:9.5px;color:#171a2c;white-space:pre;left:139.3px;transform:scaleX(0.89);transform-origin:0 50%;">60031-DOC</span>
<span style="top:297.97px;height:14px;line-height:14px;font-size:9.5px;color:#171a2c;white-space:pre;left:139.3px;transform:scaleX(0.89);transform-origin:0 50%;">60032-DOC</span>
<div style="left:138px;top:313.90999999999997px;width:856.4px;height:16.68px;background:#f0f2fb;"></div>
<span style="top:314.65px;height:14px;line-height:14px;font-size:9.5px;color:#171a2c;white-space:pre;left:139.3px;transform:scaleX(0.89);transform-origin:0 50%;">60060</span>
<span style="top:331.33px;height:14px;line-height:14px;font-size:9.5px;color:#171a2c;white-space:pre;left:139.3px;transform:scaleX(0.89);transform-origin:0 50%;">60061</span>
<div style="left:138px;top:347.27px;width:856.4px;height:16.68px;background:#f0f2fb;"></div>
<span style="top:348.01px;height:14px;line-height:14px;font-size:9.5px;color:#171a2c;white-space:pre;left:139.3px;transform:scaleX(0.89);transform-origin:0 50%;">60062</span>
<span style="top:364.69px;height:14px;line-height:14px;font-size:9.5px;color:#171a2c;white-space:pre;left:139.3px;transform:scaleX(0.89);transform-origin:0 50%;">60071</span>
<div style="left:138px;top:380.63px;width:856.4px;height:16.68px;background:#f0f2fb;"></div>
<span style="top:381.37px;height:14px;line-height:14px;font-size:9.5px;color:#171a2c;white-space:pre;left:139.3px;transform:scaleX(0.89);transform-origin:0 50%;">60072</span>
<span style="top:398.05px;height:14px;line-height:14px;font-size:9.5px;color:#171a2c;white-space:pre;left:139.3px;transform:scaleX(0.89);transform-origin:0 50%;">60073</span>
<div style="left:138px;top:413.99px;width:856.4px;height:16.68px;background:#f0f2fb;"></div>
<span style="top:414.73px;height:14px;line-height:14px;font-size:9.5px;color:#171a2c;white-space:pre;left:139.3px;transform:scaleX(0.89);transform-origin:0 50%;">60074</span>
<span style="top:431.41px;height:14px;line-height:14px;font-size:9.5px;color:#171a2c;white-space:pre;left:139.3px;transform:scaleX(0.89);transform-origin:0 50%;">60075</span>
<div style="left:138px;top:447.35px;width:856.4px;height:16.68px;background:#f0f2fb;"></div>
<span style="top:448.09px;height:14px;line-height:14px;font-size:9.5px;color:#171a2c;white-space:pre;left:139.3px;transform:scaleX(0.89);transform-origin:0 50%;">60076</span>
<span style="top:464.77px;height:14px;line-height:14px;font-size:9.5px;color:#171a2c;white-space:pre;left:139.3px;transform:scaleX(0.89);transform-origin:0 50%;">60077</span>
<div style="left:138px;top:480.71000000000004px;width:856.4px;height:16.68px;background:#f0f2fb;"></div>
<span style="top:481.45px;height:14px;line-height:14px;font-size:9.5px;color:#171a2c;white-space:pre;left:139.3px;transform:scaleX(0.89);transform-origin:0 50%;">60078</span>
<span style="top:498.13px;height:14px;line-height:14px;font-size:9.5px;color:#171a2c;white-space:pre;left:139.3px;transform:scaleX(0.89);transform-origin:0 50%;">60078E</span>
<div style="left:138px;top:514.07px;width:856.4px;height:14.42999999999995px;background:#f0f2fb;"></div>
<span style="top:514.81px;height:14px;line-height:14px;font-size:9.5px;color:#171a2c;white-space:pre;left:139.3px;transform:scaleX(0.89);transform-origin:0 50%;">60079</span>
<div style="left:994.4px;top:178.7px;width:12px;height:352px;border:1px solid #eef0f8;box-sizing:border-box;"></div>
<svg style="left:995.4px;top:181.4px;" width="10" height="7" viewBox="0 0 10 7"><path d="M1.6 5.2L4.8 2L8 5.2" fill="none" stroke="#a9b8e6" stroke-width="1"/></svg>
<div style="left:998.3px;top:188.5px;width:4px;height:334px;background:#dcdcdc;"></div>
<div style="left:135.6px;top:211.7px;width:862.6px;height:19.2px;border:3px solid #fba112;box-sizing:border-box;"></div>
<div style="left:100.7px;top:171.5px;width:3.1px;height:108px;background:#fba112;"></div>
<div style="left:100.7px;top:276.1px;width:82px;height:3.4px;background:#fba112;"></div>
<svg style="left:179px;top:270px;" width="14" height="15" viewBox="0 0 14 15"><path d="M1 1.2L12.6 7.6L1 13.4Z" fill="#fba112"/></svg>
<div style="left:191.2px;top:256px;width:820.2px;height:275.4px;background:#ffffff;border:3px solid #fba112;box-sizing:border-box;"></div>
<div style="left:194.2px;top:259px;width:814.2px;height:18.6px;background:#243a83;"></div>
<span style="top:260.90px;height:14px;line-height:14px;font-size:11px;color:#e6ebfa;white-space:pre;left:202.8px;transform:scaleX(0.89);transform-origin:0 50%;">Inventory Where Used :: New Zealand Company  - Std Manufacturing</span>
<svg style="left:994px;top:263px;" width="10" height="10" viewBox="0 0 10 10"><path d="M1.6 1.6L8.4 8.4M8.4 1.6L1.6 8.4" stroke="#9fb0e0" stroke-width="1"/></svg>
<div style="left:194.2px;top:277.6px;width:814.2px;height:21.4px;background:#e9ecf6;"></div>
<div style="left:200.2px;top:281px;width:28.3px;height:14.3px;background:#ffffff;border-radius:7.15px;"></div>
<div style="left:214.1px;top:281px;width:0.6px;height:14.3px;background:#e6e9f4;"></div>
<svg style="left:200.2px;top:281px;" width="28.3" height="14.3" viewBox="0 0 28.3 14.3"><g fill="none" stroke="#2c4191" stroke-width="1.25" stroke-linecap="round" stroke-linejoin="round"><path d="M9.241000000000001 3.95l-3.2 3.2l3.2 3.2"/><path d="M19.058999999999997 3.95l3.2 3.2l-3.2 3.2"/></g></svg>
<div style="left:235.1px;top:281.1px;width:14px;height:14px;background:#ffffff;border-radius:7.0px;"></div>
<svg style="left:237.1px;top:283.1px;" width="10" height="10" viewBox="0 0 10 10"><g fill="none" stroke="#2c4191" stroke-width="1.25" stroke-linejoin="round"><path d="M1.2 5.6L5.4 1.4L8.8 4.8L5.2 8.4H3.6Z"/><path d="M3.6 8.5H9"/></g></svg>
<div style="left:253.2px;top:281.1px;width:14px;height:14px;background:#ffffff;border-radius:7.0px;"></div>
<svg style="left:255.2px;top:283.1px;" width="10" height="10" viewBox="0 0 10 10"><g fill="none" stroke="#2c4191" stroke-width="1.4"><path d="M2.6 3.4H5.6A2.4 2.4 0 1 1 3.4 7.2"/></g><path d="M1.2 3.4L4 1.2V5.6Z" fill="#2c4191"/></svg>
<div style="left:271.2px;top:281.1px;width:14px;height:14px;background:#ffffff;border-radius:7.0px;"></div>
<svg style="left:273.2px;top:283.1px;" width="10" height="10" viewBox="0 0 10 10"><g fill="#2c4191"><rect x="4.2" y="1" width="1.7" height="1.7"/><path d="M3.2 3.8H5.9V7.6H6.9V8.9H3V7.6H4.2V5.1H3.2Z"/></g></svg>
<div style="left:825.5px;top:280px;width:176.6px;height:16.4px;background:#243a83;border-radius:8.2px;"></div>
<div style="left:883.5px;top:281px;width:0.6px;height:14.4px;background:#2e4592;"></div>
<div style="left:942.7px;top:281px;width:0.6px;height:14.4px;background:#2e4592;"></div>
<svg style="left:839px;top:282.4px;" width="12" height="12" viewBox="0 0 12 12"><rect x="1.4" y="1.4" width="8.6" height="8.6" rx="0.8" fill="none" stroke="#3fd45a" stroke-width="1.3"/><rect x="4.6" y="5.2" width="2.2" height="2.2" fill="#3fd45a"/></svg>
<span style="top:281.40px;height:14px;line-height:14px;font-size:9.6px;color:#fff;white-space:pre;left:851.8px;transform:scaleX(0.89);transform-origin:0 50%;">Save</span>
<svg style="left:892px;top:282.4px;" width="12" height="12" viewBox="0 0 12 12"><g fill="none" stroke="#3fc8ff" stroke-width="1.2"><path d="M3.6 2.6V1H10.6V8H9"/><rect x="1.2" y="3.2" width="7.4" height="7.4"/><path d="M3.4 5.4L6.4 8.4M6.4 5.4L3.4 8.4" stroke-width="1"/></g></svg>
<span style="top:281.40px;height:14px;line-height:14px;font-size:9.6px;color:#fff;white-space:pre;left:904.7px;transform:scaleX(0.89);transform-origin:0 50%;">Clearlist</span>
<svg style="left:952px;top:282.4px;" width="12" height="12" viewBox="0 0 12 12"><g fill="none" stroke="#3fc8ff" stroke-width="1.2"><path d="M3.6 2.6V1H10.6V8H9"/><rect x="1.2" y="3.2" width="7.4" height="7.4"/><path d="M3.2 6.8L4.6 8.4L6.8 5.4" stroke-width="1"/></g></svg>
<span style="top:281.40px;height:14px;line-height:14px;font-size:9.6px;color:#fff;white-space:pre;left:964.9px;transform:scaleX(0.89);transform-origin:0 50%;">Pick All</span>
<span style="top:302.90px;height:14px;line-height:14px;font-size:7.9px;color:#4660b1;white-space:pre;font-weight:bold;text-shadow:none;left:203.9px;transform:scaleX(0.88);transform-origin:0 50%;">Inventory Item Code</span>
<div style="left:200px;top:317.4px;width:116.6px;height:13px;background:#e5e8f3;border-radius:2px;"></div>
<span style="top:316.70px;height:14px;line-height:14px;font-size:9.5px;color:#4a64b0;white-space:pre;left:202.8px;transform:scaleX(0.89);transform-origin:0 50%;">60021</span>
<span style="top:302.90px;height:14px;line-height:14px;font-size:7.9px;color:#4660b1;white-space:pre;font-weight:bold;text-shadow:none;left:324.5px;transform:scaleX(0.88);transform-origin:0 50%;">Inventory Item Description</span>
<div style="left:320.8px;top:317.4px;width:383.7px;height:13.6px;background:#e5e8f3;border-radius:2px;"></div>
<span style="top:317.20px;height:14px;line-height:14px;font-size:9.5px;color:#4a64b0;white-space:pre;left:323.2px;transform:scaleX(0.89);transform-origin:0 50%;">4-Switch Grey Waterproof</span>
<span style="top:302.90px;height:14px;line-height:14px;font-size:7.9px;color:#4660b1;white-space:pre;font-weight:bold;text-shadow:none;left:712.2px;transform:scaleX(0.88);transform-origin:0 50%;">Inventory Item Group</span>
<div style="left:708.1px;top:317.2px;width:117px;height:13.8px;background:#e5e8f3;border-radius:2px;"></div>
<span style="top:317.20px;height:14px;line-height:14px;font-size:9.5px;color:#4a64b0;white-space:pre;left:710.6px;transform:scaleX(0.89);transform-origin:0 50%;">Finished Goods</span>
<span style="top:302.90px;height:14px;line-height:14px;font-size:7.9px;color:#4660b1;white-space:pre;font-weight:bold;text-shadow:none;left:832.4px;transform:scaleX(0.88);transform-origin:0 50%;">Bill of Materials Code</span>
<div style="left:828.4px;top:317.2px;width:116.6px;height:13.8px;background:#e5e8f3;border-radius:2px;"></div>
<span style="top:304.30px;height:14px;line-height:14px;font-size:7.9px;color:#4660b1;white-space:pre;font-weight:bold;text-shadow:none;left:770.3px;width:400px;text-align:center;transform:scaleX(0.88);transform-origin:50% 50%;">Invt Type</span>
<div style="left:948.7px;top:317.2px;width:43.4px;height:13.8px;background:#e5e8f3;border-radius:2px;"></div>
<span style="top:317.20px;height:14px;line-height:14px;font-size:9.5px;color:#4a64b0;white-space:pre;left:770.3px;width:400px;text-align:center;transform:scaleX(0.89);transform-origin:50% 50%;">Stck</span>
<span style="top:332.90px;height:14px;line-height:14px;font-size:7.9px;color:#4660b1;white-space:pre;font-weight:bold;text-shadow:none;left:203.9px;transform:scaleX(0.88);transform-origin:0 50%;">Replacement Item Code</span>
<div style="left:200px;top:347px;width:116.6px;height:14.2px;background:#f9fafe;border:1px solid #cdd5ee;box-sizing:border-box;border-radius:3px;"></div>
<span style="top:346.80px;height:14px;line-height:14px;font-size:9.5px;color:#1e2233;white-space:pre;left:202.8px;transform:scaleX(0.89);transform-origin:0 50%;">60075</span>
<svg style="left:305.0px;top:348.5px;" width="4" height="11" viewBox="0 0 4 11"><g fill="#2b3f8f"><circle cx="2" cy="2.2" r="1"/><circle cx="2" cy="5.5" r="1"/><circle cx="2" cy="8.8" r="1"/></g></svg>
<span style="top:332.90px;height:14px;line-height:14px;font-size:7.9px;color:#4660b1;white-space:pre;font-weight:bold;text-shadow:none;left:324.5px;transform:scaleX(0.88);transform-origin:0 50%;">Replacement Item Description</span>
<div style="left:320.8px;top:347.2px;width:383.7px;height:13.8px;background:#e5e8f3;border-radius:2px;"></div>
<div style="left:322.6px;top:349px;width:0.8px;height:10.4px;background:#3a3f55;"></div>
<span style="top:332.90px;height:14px;line-height:14px;font-size:7.9px;color:#4660b1;white-space:pre;font-weight:bold;text-shadow:none;left:712.2px;transform:scaleX(0.88);transform-origin:0 50%;">Manufacturing Client</span>
<div style="left:708.1px;top:347.2px;width:117px;height:13.8px;background:#e5e8f3;border-radius:2px;"></div>
<span style="top:347.20px;height:14px;line-height:14px;font-size:9.5px;color:#4a64b0;white-space:pre;left:710.6px;transform:scaleX(0.835);transform-origin:0 50%;">ABC-MANF</span>
<span style="top:332.90px;height:14px;line-height:14px;font-size:7.9px;color:#4660b1;white-space:pre;font-weight:bold;text-shadow:none;left:832.4px;transform:scaleX(0.88);transform-origin:0 50%;">Default Supplier Code</span>
<div style="left:828.4px;top:347.2px;width:116.6px;height:13.8px;background:#e5e8f3;border-radius:2px;"></div>
<span style="top:347.20px;height:14px;line-height:14px;font-size:9.5px;color:#4a64b0;white-space:pre;left:830.6px;transform:scaleX(0.835);transform-origin:0 50%;">ACARLOS</span>
<span style="top:334.30px;height:14px;line-height:14px;font-size:7.9px;color:#4660b1;white-space:pre;font-weight:bold;text-shadow:none;left:770.3px;width:400px;text-align:center;transform:scaleX(0.88);transform-origin:50% 50%;">Unit Size</span>
<div style="left:948.7px;top:347.2px;width:43.4px;height:13.8px;background:#e5e8f3;border-radius:2px;"></div>
<span style="top:347.20px;height:14px;line-height:14px;font-size:9.5px;color:#4a64b0;white-space:pre;left:770.3px;width:400px;text-align:center;transform:scaleX(0.89);transform-origin:50% 50%;">Ea</span>
<div style="left:200px;top:370.8px;width:790.6px;height:137.2px;background:#f8f9fd;border:1px solid #e6e9f5;box-sizing:border-box;"></div>
<div style="left:200px;top:370.8px;width:790.6px;height:18px;background:#adb9e1;"></div>
<span style="top:373.00px;height:14px;line-height:14px;font-size:8.5px;color:#111426;white-space:pre;font-weight:bold;left:201.3px;transform:scaleX(0.88);transform-origin:0 50%;">Document Code</span>
<span style="top:373.00px;height:14px;line-height:14px;font-size:8.5px;color:#111426;white-space:pre;font-weight:bold;left:318px;transform:scaleX(0.88);transform-origin:0 50%;">Document Description</span>
<span style="top:373.00px;height:14px;line-height:14px;font-size:8.5px;color:#111426;white-space:pre;font-weight:bold;left:333.79999999999995px;width:400px;text-align:center;transform:scaleX(0.88);transform-origin:50% 50%;">Date Due</span>
<span style="top:373.00px;height:14px;line-height:14px;font-size:8.5px;color:#111426;white-space:pre;font-weight:bold;left:575.7px;transform:scaleX(0.88);transform-origin:0 50%;">Customer</span>
<span style="top:373.00px;height:14px;line-height:14px;font-size:8.5px;color:#111426;white-space:pre;font-weight:bold;left:683.8px;transform:scaleX(0.88);transform-origin:0 50%;">Line Description</span>
<span style="top:373.00px;height:14px;line-height:14px;font-size:8.5px;color:#111426;white-space:pre;font-weight:bold;left:706.5px;width:400px;text-align:center;transform:scaleX(0.88);transform-origin:50% 50%;">Quantity</span>
<span style="top:373.00px;height:14px;line-height:14px;font-size:8.5px;color:#111426;white-space:pre;font-weight:bold;left:768px;width:400px;text-align:center;transform:scaleX(0.88);transform-origin:50% 50%;">Unit</span>
<div style="left:200px;top:388.9px;width:790.6px;height:16.62px;background:#ffffff;"></div>
<span style="top:390.41px;height:14px;line-height:14px;font-size:9.5px;color:#171a2c;white-space:pre;left:201.3px;transform:scaleX(0.89);transform-origin:0 50%;">MANF10653/1</span>
<span style="top:390.41px;height:14px;line-height:14px;font-size:9.3px;color:#171a2c;white-space:pre;left:318px;transform:scaleX(0.89);transform-origin:0 50%;">(Abc-Rv6W-12V) Bep Rv 6 Switch Panel 12V</span>
<span style="top:390.41px;height:14px;line-height:14px;font-size:9.5px;color:#171a2c;white-space:pre;left:333.79999999999995px;width:400px;text-align:center;transform:scaleX(0.89);transform-origin:50% 50%;">19 Feb 2025</span>
<span style="top:390.41px;height:14px;line-height:14px;font-size:9.5px;color:#171a2c;white-space:pre;left:575.7px;transform:scaleX(0.835);transform-origin:0 50%;">ABC-WHSE</span>
<span style="top:390.41px;height:14px;line-height:14px;font-size:9.5px;color:#171a2c;white-space:pre;left:683.8px;transform:scaleX(0.89);transform-origin:0 50%;">4-Switch Grey Waterproof</span>
<span style="top:390.41px;height:14px;line-height:14px;font-size:9.5px;color:#171a2c;white-space:pre;left:706.5px;width:400px;text-align:center;transform:scaleX(0.89);transform-origin:50% 50%;">8</span>
<span style="top:390.41px;height:14px;line-height:14px;font-size:9.5px;color:#171a2c;white-space:pre;left:768px;width:400px;text-align:center;transform:scaleX(0.89);transform-origin:50% 50%;">Ea</span>
<div style="left:200px;top:405.52px;width:790.6px;height:16.62px;background:#f0f2fb;"></div>
<span style="top:407.03px;height:14px;line-height:14px;font-size:9.5px;color:#171a2c;white-space:pre;left:201.3px;transform:scaleX(0.89);transform-origin:0 50%;">PACK10023</span>
<span style="top:407.03px;height:14px;line-height:14px;font-size:9.3px;color:#171a2c;white-space:pre;left:318px;transform:scaleX(0.89);transform-origin:0 50%;">(Abc-Rv6W-12V) Bep Rv 6 Switch Panel 12V</span>
<span style="top:407.03px;height:14px;line-height:14px;font-size:9.5px;color:#171a2c;white-space:pre;left:333.79999999999995px;width:400px;text-align:center;transform:scaleX(0.89);transform-origin:50% 50%;">14 Feb 2025</span>
<span style="top:407.03px;height:14px;line-height:14px;font-size:9.5px;color:#171a2c;white-space:pre;left:575.7px;transform:scaleX(0.835);transform-origin:0 50%;">ABC-WHSE</span>
<span style="top:407.03px;height:14px;line-height:14px;font-size:9.5px;color:#171a2c;white-space:pre;left:683.8px;transform:scaleX(0.89);transform-origin:0 50%;">4-Switch Grey Waterproof</span>
<span style="top:407.03px;height:14px;line-height:14px;font-size:9.5px;color:#171a2c;white-space:pre;left:706.5px;width:400px;text-align:center;transform:scaleX(0.89);transform-origin:50% 50%;">10</span>
<span style="top:407.03px;height:14px;line-height:14px;font-size:9.5px;color:#171a2c;white-space:pre;left:768px;width:400px;text-align:center;transform:scaleX(0.89);transform-origin:50% 50%;">Ea</span>
<div style="left:200px;top:422.14px;width:790.6px;height:16.62px;background:#ffffff;"></div>
<span style="top:423.65px;height:14px;line-height:14px;font-size:9.5px;color:#171a2c;white-space:pre;left:201.3px;transform:scaleX(0.89);transform-origin:0 50%;">MANF10748</span>
<span style="top:423.65px;height:14px;line-height:14px;font-size:9.3px;color:#171a2c;white-space:pre;left:318px;transform:scaleX(0.89);transform-origin:0 50%;">(Abc-Rv6W-12V) Bep Rv 6 Switch Panel 12V</span>
<span style="top:423.65px;height:14px;line-height:14px;font-size:9.5px;color:#171a2c;white-space:pre;left:333.79999999999995px;width:400px;text-align:center;transform:scaleX(0.89);transform-origin:50% 50%;">10 Nov 2025</span>
<span style="top:423.65px;height:14px;line-height:14px;font-size:9.5px;color:#171a2c;white-space:pre;left:575.7px;transform:scaleX(0.835);transform-origin:0 50%;">ABC-WHSE</span>
<span style="top:423.65px;height:14px;line-height:14px;font-size:9.5px;color:#171a2c;white-space:pre;left:683.8px;transform:scaleX(0.89);transform-origin:0 50%;">4-Switch Grey Waterproof</span>
<span style="top:423.65px;height:14px;line-height:14px;font-size:9.5px;color:#171a2c;white-space:pre;left:706.5px;width:400px;text-align:center;transform:scaleX(0.89);transform-origin:50% 50%;">25</span>
<span style="top:423.65px;height:14px;line-height:14px;font-size:9.5px;color:#171a2c;white-space:pre;left:768px;width:400px;text-align:center;transform:scaleX(0.89);transform-origin:50% 50%;">Ea</span>
<div style="left:200px;top:438.76px;width:790.6px;height:16.62px;background:#f0f2fb;"></div>
<span style="top:440.27px;height:14px;line-height:14px;font-size:9.5px;color:#171a2c;white-space:pre;left:201.3px;transform:scaleX(0.89);transform-origin:0 50%;">MANF10749</span>
<span style="top:440.27px;height:14px;line-height:14px;font-size:9.3px;color:#171a2c;white-space:pre;left:318px;transform:scaleX(0.89);transform-origin:0 50%;">(Abc-Rv6W-12V) Bep Rv 6 Switch Panel 12V</span>
<span style="top:440.27px;height:14px;line-height:14px;font-size:9.5px;color:#171a2c;white-space:pre;left:333.79999999999995px;width:400px;text-align:center;transform:scaleX(0.89);transform-origin:50% 50%;">10 Nov 2025</span>
<span style="top:440.27px;height:14px;line-height:14px;font-size:9.5px;color:#171a2c;white-space:pre;left:575.7px;transform:scaleX(0.835);transform-origin:0 50%;">ABC-WHSE</span>
<span style="top:440.27px;height:14px;line-height:14px;font-size:9.5px;color:#171a2c;white-space:pre;left:683.8px;transform:scaleX(0.89);transform-origin:0 50%;">4-Switch Grey Waterproof</span>
<span style="top:440.27px;height:14px;line-height:14px;font-size:9.5px;color:#171a2c;white-space:pre;left:706.5px;width:400px;text-align:center;transform:scaleX(0.89);transform-origin:50% 50%;">35</span>
<span style="top:440.27px;height:14px;line-height:14px;font-size:9.5px;color:#171a2c;white-space:pre;left:768px;width:400px;text-align:center;transform:scaleX(0.89);transform-origin:50% 50%;">Ea</span>
<div style="left:200px;top:455.38px;width:790.6px;height:16.62px;background:#ffffff;"></div>
<span style="top:456.89px;height:14px;line-height:14px;font-size:9.5px;color:#171a2c;white-space:pre;left:201.3px;transform:scaleX(0.89);transform-origin:0 50%;">MANF10750</span>
<span style="top:456.89px;height:14px;line-height:14px;font-size:9.3px;color:#171a2c;white-space:pre;left:318px;transform:scaleX(0.89);transform-origin:0 50%;">(Abc-Rv6W-12V) Bep Rv 6 Switch Panel 12V</span>
<span style="top:456.89px;height:14px;line-height:14px;font-size:9.5px;color:#171a2c;white-space:pre;left:333.79999999999995px;width:400px;text-align:center;transform:scaleX(0.89);transform-origin:50% 50%;">10 Nov 2025</span>
<span style="top:456.89px;height:14px;line-height:14px;font-size:9.5px;color:#171a2c;white-space:pre;left:575.7px;transform:scaleX(0.835);transform-origin:0 50%;">ABC-WHSE</span>
<span style="top:456.89px;height:14px;line-height:14px;font-size:9.5px;color:#171a2c;white-space:pre;left:683.8px;transform:scaleX(0.89);transform-origin:0 50%;">4-Switch Grey Waterproof</span>
<span style="top:456.89px;height:14px;line-height:14px;font-size:9.5px;color:#171a2c;white-space:pre;left:706.5px;width:400px;text-align:center;transform:scaleX(0.89);transform-origin:50% 50%;">50</span>
<span style="top:456.89px;height:14px;line-height:14px;font-size:9.5px;color:#171a2c;white-space:pre;left:768px;width:400px;text-align:center;transform:scaleX(0.89);transform-origin:50% 50%;">Ea</span>
<div style="left:200px;top:472.0px;width:790.6px;height:16.62px;background:#f0f2fb;"></div>
<span style="top:473.51px;height:14px;line-height:14px;font-size:9.5px;color:#171a2c;white-space:pre;left:201.3px;transform:scaleX(0.89);transform-origin:0 50%;">JOBS10734</span>
<span style="top:473.51px;height:14px;line-height:14px;font-size:9.3px;color:#171a2c;white-space:pre;left:318px;transform:scaleX(0.89);transform-origin:0 50%;">(Abc-Rv6W-12V) Bep Rv 6 Switch Panel</span>
<span style="top:473.51px;height:14px;line-height:14px;font-size:9.5px;color:#171a2c;white-space:pre;left:333.79999999999995px;width:400px;text-align:center;transform:scaleX(0.89);transform-origin:50% 50%;">26 Dec 2024</span>
<span style="top:473.51px;height:14px;line-height:14px;font-size:9.5px;color:#171a2c;white-space:pre;left:575.7px;transform:scaleX(0.835);transform-origin:0 50%;">HOFMANN</span>
<span style="top:473.51px;height:14px;line-height:14px;font-size:9.5px;color:#171a2c;white-space:pre;left:683.8px;transform:scaleX(0.89);transform-origin:0 50%;">4-Switch Grey Waterproof</span>
<span style="top:473.51px;height:14px;line-height:14px;font-size:9.5px;color:#171a2c;white-space:pre;left:706.5px;width:400px;text-align:center;transform:scaleX(0.89);transform-origin:50% 50%;">2</span>
<span style="top:473.51px;height:14px;line-height:14px;font-size:9.5px;color:#171a2c;white-space:pre;left:768px;width:400px;text-align:center;transform:scaleX(0.89);transform-origin:50% 50%;">Ea</span>
<span style="top:473.51px;height:14px;line-height:14px;font-size:9.35px;color:#1e2233;white-space:pre;right:531.6px;transform:scaleX(0.89);transform-origin:100% 50%;">of w</span>
<div style="left:990.6px;top:370.8px;width:11.8px;height:137.2px;border:1px solid #eceff8;box-sizing:border-box;"></div>
<svg style="left:992px;top:374px;" width="10" height="7" viewBox="0 0 10 7"><path d="M1.6 5.2L4.8 2L8 5.2" fill="none" stroke="#c9d2ee" stroke-width="1"/></svg>
<svg style="left:992px;top:500px;" width="10" height="7" viewBox="0 0 10 7"><path d="M1.6 1.8L4.8 5L8 1.8" fill="none" stroke="#c9d2ee" stroke-width="1"/></svg>
<div style="left:995px;top:381.5px;width:3.8px;height:117px;background:#dcdcdc;"></div>
<div style="left:194.2px;top:516.2px;width:814.2px;height:12.4px;background:#243a83;"></div>
<span style="top:515.60px;height:14px;line-height:14px;font-size:9.5px;color:#dfe5f7;white-space:pre;left:199.8px;transform:scaleX(0.89);transform-origin:0 50%;">ABL, InvtModDocs</span>
<span style="top:515.60px;height:14px;line-height:14px;font-size:9.3px;color:#dfe5f7;white-space:pre;left:640.3px;transform:scaleX(0.89);transform-origin:0 50%;">60021</span>
<svg style="left:995.4px;top:517.6px;" width="10" height="10" viewBox="0 0 10 10"><g fill="none" stroke="#e6ebfa" stroke-width="1.1"><path d="M1 3.4V1H3.4M6.6 1H9V3.4M9 6.6V9H6.6M3.4 9H1V6.6"/><circle cx="5" cy="5" r="1.9"/></g></svg>
<div style="left:196.2px;top:300.6px;width:124px;height:32.8px;border:3.1px solid #fba112;box-sizing:border-box;"></div>
<div style="left:196.2px;top:331.1px;width:124px;height:33.8px;border:3.1px solid #fba112;box-sizing:border-box;"></div>
<div style="left:197.1px;top:368.9px;width:102.8px;height:125.2px;border:3.1px solid #fba112;box-sizing:border-box;"></div>
<svg style="left:297.3px;top:242.39999999999998px;" width="240.7" height="116.0" viewBox="0 0 240.7 116.0"><defs><linearGradient id="g337" x1="0" y1="0" x2="0" y2="1"><stop offset="0" stop-color="#ffffff"/><stop offset="0.5" stop-color="#f8f8fa"/><stop offset="1" stop-color="#e8e8ed"/></linearGradient><filter id="fg337" x="-10%" y="-10%" width="125%" height="140%"><feGaussianBlur stdDeviation="1.2"/></filter></defs><path d="M45.5 40.0H195.2Q200.7 40.0 200.7 45.5V70.5Q200.7 76.0 195.2 76.0H45.5Q40.0 76.0 40.0 70.5V61.9L13.1 73.8L40.0 48.4V45.5Q40.0 40.0 45.5 40.0Z" transform="translate(1.6 2)" fill="#000" opacity="0.28" filter="url(#fg337)"/><path d="M45.5 40.0H195.2Q200.7 40.0 200.7 45.5V70.5Q200.7 76.0 195.2 76.0H45.5Q40.0 76.0 40.0 70.5V61.9L13.1 73.8L40.0 48.4V45.5Q40.0 40.0 45.5 40.0Z" fill="url(#g337)" stroke="#3f74dc" stroke-width="1.1" stroke-linejoin="round"/></svg>
<span style="top:294.00px;height:14px;line-height:14px;font-size:10.67px;color:#222;white-space:pre;text-shadow:none;left:217.2px;width:400px;text-align:center;transform:scaleX(1);transform-origin:50% 50%;">Item to be replaced</span>
<svg style="left:302.8px;top:310.6px;" width="240.7" height="116.09999999999997" viewBox="0 0 240.7 116.09999999999997"><defs><linearGradient id="g342" x1="0" y1="0" x2="0" y2="1"><stop offset="0" stop-color="#ffffff"/><stop offset="0.5" stop-color="#f8f8fa"/><stop offset="1" stop-color="#e8e8ed"/></linearGradient><filter id="fg342" x="-10%" y="-10%" width="125%" height="140%"><feGaussianBlur stdDeviation="1.2"/></filter></defs><path d="M45.5 40.0H195.2Q200.7 40.0 200.7 45.5V70.6Q200.7 76.1 195.2 76.1H45.5Q40.0 76.1 40.0 70.6V60.6L8.2 44.2L40.0 48.1V45.5Q40.0 40.0 45.5 40.0Z" transform="translate(1.6 2)" fill="#000" opacity="0.28" filter="url(#fg342)"/><path d="M45.5 40.0H195.2Q200.7 40.0 200.7 45.5V70.6Q200.7 76.1 195.2 76.1H45.5Q40.0 76.1 40.0 70.6V60.6L8.2 44.2L40.0 48.1V45.5Q40.0 40.0 45.5 40.0Z" fill="url(#g342)" stroke="#3f74dc" stroke-width="1.1" stroke-linejoin="round"/></svg>
<span style="top:362.00px;height:14px;line-height:14px;font-size:10.67px;color:#222;white-space:pre;text-shadow:none;left:222.7px;width:400px;text-align:center;transform:scaleX(1);transform-origin:50% 50%;">Substitute Item</span>
<svg style="left:279.3px;top:427.3px;" width="241.09999999999997" height="115.30000000000001" viewBox="0 0 241.09999999999997 115.30000000000001"><defs><linearGradient id="g319" x1="0" y1="0" x2="0" y2="1"><stop offset="0" stop-color="#ffffff"/><stop offset="0.5" stop-color="#f8f8fa"/><stop offset="1" stop-color="#e8e8ed"/></linearGradient><filter id="fg319" x="-10%" y="-10%" width="125%" height="140%"><feGaussianBlur stdDeviation="1.2"/></filter></defs><path d="M45.5 40.0H195.6Q201.1 40.0 201.1 45.5V69.8Q201.1 75.3 195.6 75.3H45.5Q40.0 75.3 40.0 69.8V60.0L8.5 43.7L40.0 47.0V45.5Q40.0 40.0 45.5 40.0Z" transform="translate(1.6 2)" fill="#000" opacity="0.28" filter="url(#fg319)"/><path d="M45.5 40.0H195.6Q201.1 40.0 201.1 45.5V69.8Q201.1 75.3 195.6 75.3H45.5Q40.0 75.3 40.0 69.8V60.0L8.5 43.7L40.0 47.0V45.5Q40.0 40.0 45.5 40.0Z" fill="url(#g319)" stroke="#3f74dc" stroke-width="1.1" stroke-linejoin="round"/></svg>
<span style="top:478.00px;height:14px;line-height:14px;font-size:10.67px;color:#222;white-space:pre;text-shadow:none;left:199.3px;width:400px;text-align:center;transform:scaleX(1);transform-origin:50% 50%;">Jobs in Progress</span>
<div style="left:411.1px;top:15.9px;width:142.6px;height:48.8px;background:#ffffff;border:3.2px solid #fba112;box-sizing:border-box;border-radius:13.5px;"></div>
<span style="top:33.30px;height:14px;line-height:14px;font-size:10.6px;color:#10163c;white-space:pre;font-weight:bold;text-shadow:none;left:282.2px;width:400px;text-align:center;transform:scaleX(1);transform-origin:50% 50%;">Inventory Maintenance</span>
<div style="left:0px;top:0px;width:1024px;height:1px;background:#e4e7f3;"></div>
<div style="left:0px;top:0px;width:1.2px;height:545px;background:#dfe3f0;"></div>
<div style="left:1022.8px;top:0px;width:1.2px;height:545px;background:#e6e9f3;"></div>
</body></html>
